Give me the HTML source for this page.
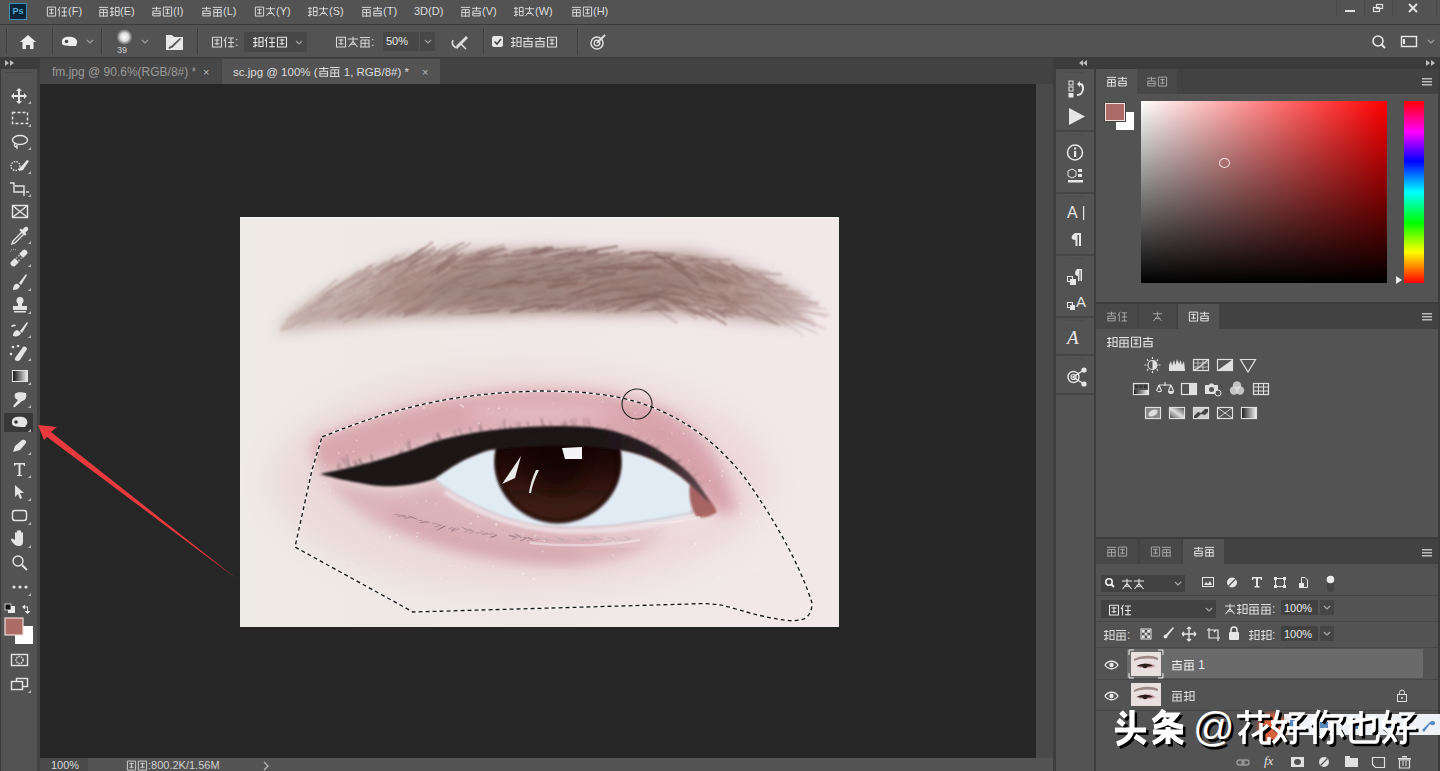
<!DOCTYPE html>
<html><head><meta charset="utf-8">
<style>
*{box-sizing:border-box;margin:0;padding:0}
html,body{width:1440px;height:771px;overflow:hidden;background:#3b3b3b;font-family:"Liberation Sans",sans-serif;color:#dcdcdc}
.a{position:absolute}
.t{position:absolute;white-space:nowrap;font-size:12px;line-height:14px}
#menubar{left:0;top:0;width:1440px;height:24px;background:#535353}
#optbar{left:0;top:25px;width:1440px;height:32px;background:#535353}
#tabbar{left:40px;top:58px;width:1013px;height:26px;background:#424242}
#toolbar{left:1px;top:69px;width:37px;height:702px;background:#535353}
#canvas{left:40px;top:84px;width:996px;height:674px;background:#262626}
#vscroll{left:1036px;top:84px;width:17px;height:674px;background:#4a4a4a}
#status{left:40px;top:758px;width:1013px;height:13px;background:#535353}
#rcol{left:1056px;top:69px;width:38px;height:702px;background:#535353}
.panel{position:absolute;left:1096px;width:342px;background:#535353}
.ptabs{position:absolute;left:0;top:0;width:342px;height:25px;background:#424242}
.ptab{position:absolute;top:0;height:25px;background:#484848;font-size:11px;line-height:25px;text-align:center;color:#a8a8a8}
.ptab.on{background:#535353;color:#e8e8e8}
.sep{position:absolute;width:1px;background:#444}
.g{display:inline-block;width:1em;height:1em;vertical-align:-0.14em;fill:none;stroke:currentColor;stroke-width:1.05;overflow:visible}
</style></head><body><svg width="0" height="0" style="position:absolute">
<symbol id="g0" viewBox="0 0 12 12"><path d="M1 2.5H5.5M3.2 1V11.5M1 6.5H5.5M1 10.5L5.5 9M7 1.5H11V10.5H7ZM7 6H11"/></symbol>
<symbol id="g1" viewBox="0 0 12 12"><path d="M1 2.5H11M6 0.8V5M2 5.5H10V10.8H2ZM2 8.2H10"/></symbol>
<symbol id="g2" viewBox="0 0 12 12"><path d="M1.5 1.2H10.5V11H1.5ZM3.5 4H8.5M6 2.8V9M3.5 7.8H8.5"/></symbol>
<symbol id="g3" viewBox="0 0 12 12"><path d="M3.5 0.8L1 5M2.5 3.8V11.5M5 2H11M8 2V11.5M5 6.5H11M5 10.8H11"/></symbol>
<symbol id="g4" viewBox="0 0 12 12"><path d="M1 3H11M6 0.8V5.5M6 5.5L1.5 11M6 5.5L10.5 11M3 8.2H9"/></symbol>
<symbol id="g5" viewBox="0 0 12 12"><path d="M1 1.5H11M2 4V10.5M2 4H10V10.5M2 7.2H10M6 4V11.5M1 11H11"/></symbol>
</svg>
<div id="menubar" class="a">
  <div class="a" style="left:9px;top:3px;width:18px;height:17px;background:#0a2538;border:1px solid #3b8fb5;color:#52a9d6;font-size:9px;line-height:15px;text-align:center;font-weight:bold">Ps</div>
  <div class="t" style="left:46px;top:4px;font-size:11px"><svg class="g"><use href="#g2"/></svg><svg class="g"><use href="#g3"/></svg>(F)</div>
  <div class="t" style="left:98px;top:4px;font-size:11px"><svg class="g"><use href="#g5"/></svg><svg class="g"><use href="#g0"/></svg>(E)</div>
  <div class="t" style="left:151px;top:4px;font-size:11px"><svg class="g"><use href="#g1"/></svg><svg class="g"><use href="#g2"/></svg>(I)</div>
  <div class="t" style="left:201px;top:4px;font-size:11px"><svg class="g"><use href="#g1"/></svg><svg class="g"><use href="#g5"/></svg>(L)</div>
  <div class="t" style="left:254px;top:4px;font-size:11px"><svg class="g"><use href="#g2"/></svg><svg class="g"><use href="#g4"/></svg>(Y)</div>
  <div class="t" style="left:307px;top:4px;font-size:11px"><svg class="g"><use href="#g0"/></svg><svg class="g"><use href="#g4"/></svg>(S)</div>
  <div class="t" style="left:361px;top:4px;font-size:11px"><svg class="g"><use href="#g5"/></svg><svg class="g"><use href="#g1"/></svg>(T)</div>
  <div class="t" style="left:414px;top:4px;font-size:11px">3D(D)</div>
  <div class="t" style="left:460px;top:4px;font-size:11px"><svg class="g"><use href="#g5"/></svg><svg class="g"><use href="#g1"/></svg>(V)</div>
  <div class="t" style="left:513px;top:4px;font-size:11px"><svg class="g"><use href="#g0"/></svg><svg class="g"><use href="#g4"/></svg>(W)</div>
  <div class="t" style="left:571px;top:4px;font-size:11px"><svg class="g"><use href="#g5"/></svg><svg class="g"><use href="#g2"/></svg>(H)</div>
  <svg class="a" style="left:1330px;top:0" width="110" height="24">
   <rect x="6" y="0" width="1" height="16" fill="#4a4a4a"/><rect x="34" y="0" width="1" height="16" fill="#4a4a4a"/><rect x="62" y="0" width="1" height="16" fill="#4a4a4a"/><rect x="106" y="0" width="1" height="16" fill="#4a4a4a"/>
   <rect x="15" y="10" width="10" height="2" fill="#e0e0e0"/>
   <rect x="43.5" y="7.5" width="6" height="4" fill="none" stroke="#e0e0e0" stroke-width="1.2"/>
   <rect x="46.5" y="4.5" width="6" height="4" fill="none" stroke="#e0e0e0" stroke-width="1.2"/>
   <path d="M79 4 L87 12 M87 4 L79 12" stroke="#e8e8e8" stroke-width="1.8"/>
  </svg>
</div>
<div id="optbar" class="a">
 <svg class="a" style="left:0;top:0" width="1440" height="32" viewBox="0 25 1440 32">
  <g fill="#3f3f3f"><rect x="6" y="28" width="1" height="26"/><rect x="52" y="28" width="1" height="26"/><rect x="101" y="28" width="1" height="26"/><rect x="197" y="28" width="1" height="26"/><rect x="483" y="28" width="1" height="26"/><rect x="577" y="28" width="1" height="26"/></g>
  <g fill="#595959"><rect x="7" y="28" width="1" height="26"/><rect x="53" y="28" width="1" height="26"/><rect x="102" y="28" width="1" height="26"/><rect x="198" y="28" width="1" height="26"/><rect x="484" y="28" width="1" height="26"/><rect x="578" y="28" width="1" height="26"/></g>
  <!-- home -->
  <path d="M28 35 L36 42 L33.5 42 L33.5 49 L30 49 L30 45 L26 45 L26 49 L22.5 49 L22.5 42 L20 42Z" fill="#ececec"/>
  <!-- sponge -->
  <path d="M62 41 C62 37 68 36 72 37 C76 38 78 41 77 43 L76 46 C71 46 64 46 62 44Z" fill="#ececec"/>
  <circle cx="66.5" cy="41.5" r="1.8" fill="#444"/>
  <path d="M87 40 L90 43 L93 40" fill="none" stroke="#a0a0a0" stroke-width="1.2"/>
  <!-- brush preview -->
  <defs><radialGradient id="bp"><stop offset="0" stop-color="#fff"/><stop offset="0.5" stop-color="#ddd"/><stop offset="1" stop-color="#535353"/></radialGradient></defs>
  <circle cx="124.5" cy="37" r="8" fill="url(#bp)"/>
  <path d="M142 40 L145 43 L148 40" fill="none" stroke="#a0a0a0" stroke-width="1.2"/>
  <!-- brush settings -->
  <path d="M166 35 L172 35 L174 37 L183 37 L183 50 L166 50Z" fill="#e8e8e8"/>
  <path d="M170 47 L180 38 L181 39 L172 48Z" fill="#555"/>
  <path d="M168.5 48.5 C169 46.5 170 46 171.5 47 C171 48.5 170 49 168.5 48.5Z" fill="#555"/>
  <!-- dropdown bg -->
  <rect x="244" y="32" width="63" height="20" fill="#474747"/>
  <path d="M296 41 L299 44 L302 41" fill="none" stroke="#a0a0a0" stroke-width="1.2"/>
  <rect x="383" y="32" width="36" height="19" fill="#474747"/>
  <rect x="420" y="32" width="15" height="19" fill="#474747"/>
  <path d="M425 40 L428 43 L431 40" fill="none" stroke="#a0a0a0" stroke-width="1.2"/>
  <!-- airbrush -->
  <path d="M453 40 C451 44 454 48 458 48" fill="none" stroke="#ddd" stroke-width="1.6"/>
  <path d="M456 46 L466 36 L468 38 L458 48Z" fill="#ddd"/>
  <path d="M461 44 L466 49" stroke="#ddd" stroke-width="1.5"/>
  <!-- checkbox -->
  <rect x="492" y="36" width="11" height="11" rx="2" fill="#e8e8e8"/>
  <path d="M494.5 41.5 L497 44 L501 39" fill="none" stroke="#444" stroke-width="1.6"/>
  <!-- pressure icon -->
  <circle cx="597" cy="43" r="6" fill="none" stroke="#ddd" stroke-width="1.5"/>
  <circle cx="597" cy="43" r="2.8" fill="none" stroke="#ddd" stroke-width="1.3"/>
  <path d="M597 43 L605 35" stroke="#ddd" stroke-width="2"/>
  <!-- right -->
  <circle cx="1378" cy="41" r="5" fill="none" stroke="#e8e8e8" stroke-width="1.6"/>
  <path d="M1381.5 44.5 L1385 48" stroke="#e8e8e8" stroke-width="2"/>
  <rect x="1401.5" y="36.5" width="15" height="10" fill="none" stroke="#e8e8e8" stroke-width="1.4"/>
  <rect x="1403" y="39" width="2" height="5" fill="#e8e8e8"/>
  <path d="M1428 40 L1431 43 L1434 40" fill="none" stroke="#a0a0a0" stroke-width="1.2"/>
 </svg>
 <div class="t" style="left:117px;top:20px;font-size:9px;line-height:10px;color:#ccc">39</div>
 <div class="t" style="left:211px;top:10px;font-size:12px;color:#d8d8d8"><svg class="g"><use href="#g2"/></svg><svg class="g"><use href="#g3"/></svg>:</div>
 <div class="t" style="left:252px;top:10px;font-size:12px;color:#e8e8e8"><svg class="g"><use href="#g0"/></svg><svg class="g"><use href="#g3"/></svg><svg class="g"><use href="#g2"/></svg></div>
 <div class="t" style="left:335px;top:10px;font-size:12px;color:#d8d8d8"><svg class="g"><use href="#g2"/></svg><svg class="g"><use href="#g4"/></svg><svg class="g"><use href="#g5"/></svg>:</div>
 <div class="t" style="left:386px;top:9px;font-size:11px;color:#e8e8e8">50%</div>
 <div class="t" style="left:510px;top:10px;font-size:12px;color:#e0e0e0"><svg class="g"><use href="#g0"/></svg><svg class="g"><use href="#g1"/></svg><svg class="g"><use href="#g1"/></svg><svg class="g"><use href="#g2"/></svg></div>
</div>
<div id="tabbar" class="a">
  <div class="a" style="left:0;top:1px;width:181px;height:25px;background:#474747"></div>
  <div class="t" style="left:12px;top:7px;font-size:12px;color:#9a9a9a">fm.jpg @ 90.6%(RGB/8#) *</div>
  <div class="t" style="left:163px;top:7px;font-size:11px;color:#bbb">×</div>
  <div class="a" style="left:182px;top:1px;width:218px;height:25px;background:#535353"></div>
  <div class="t" style="left:193px;top:7px;font-size:11.5px;color:#dcdcdc">sc.jpg @ 100% (<svg class="g"><use href="#g1"/></svg><svg class="g"><use href="#g5"/></svg> 1, RGB/8#) *</div>
  <div class="t" style="left:382px;top:7px;font-size:11px;color:#bbb">×</div>
</div>
<div id="toolbar" class="a"></div>
<svg class="a" style="left:0;top:57px" width="40" height="12"><rect x="0" y="0" width="40" height="12" fill="#3c3c3c"/><rect x="15" y="0" width="25" height="1" fill="#3c3c3c"/><path d="M5 3 L9 6 L5 9Z M10 3 L14 6 L10 9Z" fill="#bdbdbd"/></svg>
<svg class="a" style="left:0;top:69px" width="40" height="702" viewBox="0 69 40 702">
 <rect x="0" y="69" width="1" height="702" fill="#3a3a3a"/>
 <rect x="37" y="69" width="3" height="702" fill="#424242"/>
 <rect x="5" y="72" width="28" height="1" fill="#4a4a4a"/>
 <rect x="4" y="413" width="29" height="19" fill="#383838"/>
 <g fill="#e4e4e4" stroke="none">
  <!-- move -->
  <path d="M19 88 L22 91 L20 91 L20 95 L24 95 L24 93 L27 96 L24 99 L24 97 L20 97 L20 101 L22 101 L19 104 L16 101 L18 101 L18 97 L14 97 L14 99 L11 96 L14 93 L14 95 L18 95 L18 91 L16 91Z"/>
 </g>
 <g fill="none" stroke="#e4e4e4" stroke-width="1.4">
  <!-- marquee -->
  <rect x="12.5" y="112.5" width="15" height="11" stroke-dasharray="3 2"/>
  <!-- lasso -->
  <ellipse cx="20" cy="140" rx="7.5" ry="4.5"/>
  <path d="M15 143 C13 147 17 148 17 145 L17 149"/>
  <!-- quick select -->
  <circle cx="15.5" cy="166" r="4.5" stroke-dasharray="1.5 1.2"/>
  <!-- crop -->
  <path d="M10 183 L14 183 L14 192 L25 192 M24 196 L24 186 L15 186 M26 192 L29 192"/>
  <!-- frame -->
  <rect x="12.5" y="205.5" width="15" height="12"/>
  <path d="M12.5 205.5 L27.5 217.5 M27.5 205.5 L12.5 217.5"/>
  <!-- eyedropper -->
  <path d="M13 241 L22 232 L24 234 L15 243 L12 244Z"/>
  <!-- rect tool -->
  <rect x="12.5" y="510.5" width="14" height="10" rx="2.5"/>
  <!-- zoom -->
  <circle cx="18" cy="561" r="5"/>
  <path d="M22 565 L27 570" stroke-width="2"/>
  <!-- quick mask -->
  <rect x="11.5" y="654.5" width="16" height="11"/>
  <circle cx="19.5" cy="660" r="3.5" stroke-dasharray="1.5 1"/>
  <!-- screen mode -->
  <rect x="16.5" y="678.5" width="11" height="8"/>
  <rect x="11.5" y="681.5" width="11" height="8" fill="#535353"/>
 </g>
 <g fill="#e4e4e4">
  <path d="M19 169 L27 160 L29 161 L23 170 L19 171Z"/>
  <!-- eyedropper top -->
  <path d="M21 231 L25 227 C27 226 29 228 28 230 L24 234Z"/>
  <!-- healing -->
  <path d="M11 262 L23 250 C25 248 29 252 27 254 L15 266 C13 268 9 264 11 262Z"/>
  <g transform="rotate(-45 19 258)"><rect x="16" y="255" width="6" height="6" fill="#4a4a4a"/><circle cx="17.5" cy="256.5" r="0.8" fill="#ddd"/><circle cx="20.5" cy="256.5" r="0.8" fill="#ddd"/><circle cx="17.5" cy="259.5" r="0.8" fill="#ddd"/><circle cx="20.5" cy="259.5" r="0.8" fill="#ddd"/></g>
  <path d="M10 252 A4 4 0 0 1 16 250" fill="none" stroke="#ccc" stroke-width="1" stroke-dasharray="1 1"/>
  <rect x="19" y="231" width="8" height="2.2" transform="rotate(45 23 232)"/>
  <!-- brush -->
  <path d="M19 283 L26 274 L27 275 L21 285Z"/>
  <path d="M13 290 C13 286 15 283 18 284 L20 286 C19 289 16 290 13 290Z"/>
  <!-- stamp -->
  <circle cx="20" cy="300.5" r="3.5"/>
  <rect x="18" y="302" width="4" height="4"/>
  <path d="M13 306 L27 306 L27 310 L13 310Z"/>
  <rect x="14" y="311" width="12" height="1.5"/>
  <!-- history brush -->
  <path d="M20 331 L27 322 L28 323 L22 333Z"/>
  <path d="M13 336 C13 332 16 329 19 331 L21 333 C20 336 16 337 13 336Z"/>
  <path d="M11 327 C12 324 15 324 16 326Z"/>
  <!-- eraser -->
  <path d="M15 358 L23 347 C24 346 27 347 27 349 L20 360 C18 362 14 361 15 358Z"/>
  <circle cx="13" cy="347" r="1.3"/><circle cx="18" cy="346" r="1.3"/><circle cx="11" cy="354" r="1.3"/>
  <!-- smudge -->
  <path d="M15 394 C16 392 22 392 26 393 C27 397 26 400 22 401 L15 407 C13 408 13 406 14 405 L18 400 C15 399 14 396 15 394Z"/>
  <!-- sponge selected -->
  <path d="M12 421 C12 417 18 416 23 417 C27 418 28 422 27 424 L25 427 C20 427 13 427 12 424Z"/>
  <!-- pen -->
  <path d="M13 452 L15 446 L22 440 C24 439 27 441 26 443 L20 450Z"/>
  <!-- type -->
  <path d="M14 463 L25 463 L25 466 L24 466 L23.5 464.5 L20.5 464.5 L20.5 475 L22 475 L22 476 L17 476 L17 475 L18.5 475 L18.5 464.5 L15.5 464.5 L15 466 L14 466Z"/>
  <!-- path select -->
  <path d="M15 485 L24 493 L20 493 L22 498 L20 499 L18 494 L15 497Z"/>
  <!-- hand -->
  <path d="M15 540 L15 533 C15 532 17 532 17 533 L17 538 L17 531 C17 530 19 530 19 531 L19 538 L19 531 C19 530 21 530 21 531 L21 538 L21 533 C21 532 23 532 23 533 L23 542 C23 545 21 546 19 546 C16 546 15 545 13 543 L11 540 C11 539 12 538 13 539Z"/>
  <!-- dots -->
  <circle cx="14" cy="587" r="1.6"/><circle cx="20" cy="587" r="1.6"/><circle cx="26" cy="587" r="1.6"/>
  <!-- small swatches -->
  <rect x="8" y="606" width="7" height="7" fill="#e8e8e8"/>
  <rect x="5" y="604" width="6" height="6" fill="#111" stroke="#eee" stroke-width="0.8"/>
  <path d="M22 607 L25 604.5 L25 606.5 L28 606.5 L28 611 L30.5 611 L27.5 614 L24.5 611 L27 611 L27 607.5 L25 607.5 L25 609.5Z"/>
 </g>
 <!-- corner triangles -->
 <g fill="#b9b9b9">
  <path d="M31 101 L31 104 L28 104Z"/><path d="M31 124 L31 127 L28 127Z"/><path d="M31 147 L31 150 L28 150Z"/>
  <path d="M31 171 L31 174 L28 174Z"/><path d="M31 194 L31 197 L28 197Z"/><path d="M31 241 L31 244 L28 244Z"/>
  <path d="M31 264 L31 267 L28 267Z"/><path d="M31 288 L31 291 L28 291Z"/><path d="M31 311 L31 314 L28 314Z"/>
  <path d="M31 335 L31 338 L28 338Z"/><path d="M31 358 L31 361 L28 361Z"/><path d="M31 382 L31 385 L28 385Z"/>
  <path d="M31 405 L31 408 L28 408Z"/><path d="M31 429 L31 432 L28 432Z"/><path d="M31 452 L31 455 L28 455Z"/>
  <path d="M31 475 L31 478 L28 478Z"/><path d="M31 498 L31 501 L28 501Z"/><path d="M31 522 L31 525 L28 525Z"/>
  <path d="M31 545 L31 548 L28 548Z"/><path d="M31 593 L31 596 L28 596Z"/><path d="M31 690 L31 693 L28 693Z"/>
 </g>
 <!-- gradient tool -->
 <defs><linearGradient id="gt" x1="0" x2="1"><stop offset="0" stop-color="#111"/><stop offset="1" stop-color="#eee"/></linearGradient></defs>
 <rect x="12.5" y="370.5" width="15" height="11" fill="url(#gt)" stroke="#e4e4e4" stroke-width="1"/>
 <circle cx="16" cy="422" r="1.8" fill="#333"/>
 <!-- fg/bg -->
 <rect x="15" y="626" width="18" height="18" fill="#fff"/>
 <rect x="5" y="618" width="18" height="17" fill="#ad6c66" stroke="#f0dcd8" stroke-width="1.2"/>
</svg>

<div id="canvas" class="a"></div>
<svg class="a" style="left:240px;top:217px" width="599" height="410" viewBox="240 217 599 410">
<defs>
 <filter id="b1" x="-20%" y="-20%" width="140%" height="140%"><feGaussianBlur stdDeviation="1.2"/></filter>
 <filter id="b1s" x="-5%" y="-20%" width="110%" height="140%"><feGaussianBlur stdDeviation="0.7"/></filter>
 <filter id="b2" x="-20%" y="-20%" width="140%" height="140%"><feGaussianBlur stdDeviation="3"/></filter>
 <filter id="b3" x="-30%" y="-30%" width="160%" height="160%"><feGaussianBlur stdDeviation="7"/></filter>
 <filter id="b4" x="-30%" y="-30%" width="160%" height="160%"><feGaussianBlur stdDeviation="14"/></filter>
 <linearGradient id="skin" x1="0" y1="0" x2="1" y2="0">
  <stop offset="0" stop-color="#eeeae5"/><stop offset="0.5" stop-color="#f0e8e7"/><stop offset="1" stop-color="#f2e7e9"/>
 </linearGradient>
 <radialGradient id="iris" cx="0.5" cy="0.5" r="0.5">
  <stop offset="0" stop-color="#1a0a08"/><stop offset="0.3" stop-color="#24100b"/><stop offset="0.6" stop-color="#3a1a12"/><stop offset="0.88" stop-color="#3e1c13"/><stop offset="0.96" stop-color="#2a120c"/><stop offset="1" stop-color="#2a120c" stop-opacity="0.5"/>
 </radialGradient>
</defs>
<rect x="240" y="217" width="599" height="410" fill="url(#skin)"/>
<rect x="240" y="217" width="599" height="2" fill="#f6f4f2"/>
<!-- soft pink cheek tones -->
<ellipse cx="520" cy="480" rx="250" ry="110" fill="#e8c8cc" opacity="0.45" filter="url(#b4)"/>
<!-- eyebrow -->
<filter id="bbr" x="-5%" y="-20%" width="110%" height="140%"><feGaussianBlur stdDeviation="1.0"/></filter>
<linearGradient id="bmg" gradientUnits="userSpaceOnUse" x1="274" y1="0" x2="806" y2="0"><stop offset="0" stop-color="#fff" stop-opacity="0.5"/><stop offset="0.25" stop-color="#fff" stop-opacity="0.95"/><stop offset="0.85" stop-color="#fff" stop-opacity="1"/><stop offset="1" stop-color="#fff" stop-opacity="0.6"/></linearGradient>
<mask id="bmask" maskUnits="userSpaceOnUse" x="240" y="217" width="599" height="200"><rect x="240" y="217" width="599" height="200" fill="url(#bmg)"/></mask>
<g mask="url(#bmask)">
<path d="M274 333 L274.0 333.0 L287.6 316.8 L301.3 306.2 L314.9 296.7 L328.6 289.7 L342.2 282.9 L355.8 276.6 L369.5 271.0 L383.1 265.4 L396.8 259.7 L410.4 257.0 L424.1 255.7 L437.7 254.3 L451.3 252.9 L465.0 251.8 L478.6 251.4 L492.3 250.9 L505.9 250.4 L519.5 249.9 L533.2 249.4 L546.8 249.0 L560.5 249.5 L574.1 250.0 L587.7 250.5 L601.4 251.0 L615.0 251.5 L628.7 252.0 L642.3 252.0 L655.9 252.0 L669.6 252.0 L683.2 252.0 L696.9 253.3 L710.5 257.0 L724.2 260.7 L737.8 264.3 L751.4 269.4 L765.1 275.6 L778.7 281.8 L792.4 289.2 L806.0 302.0 L806.0 314.0 L792.4 323.8 L778.7 322.7 L765.1 321.7 L751.4 320.6 L737.8 319.2 L724.2 317.3 L710.5 315.5 L696.9 313.7 L683.2 313.1 L669.6 313.4 L655.9 313.6 L642.3 313.8 L628.7 314.0 L615.0 313.8 L601.4 313.7 L587.7 313.5 L574.1 313.3 L560.5 313.2 L546.8 313.0 L533.2 313.4 L519.5 313.9 L505.9 314.4 L492.3 314.9 L478.6 315.3 L465.0 315.8 L451.3 316.3 L437.7 316.7 L424.1 317.2 L410.4 317.7 L396.8 318.5 L383.1 320.1 L369.5 321.7 L355.8 323.3 L342.2 324.9 L328.6 326.5 L314.9 328.1 L301.3 329.8 L287.6 331.4 L274.0 333.0 Z" fill="#ab8e88" opacity="0.9" filter="url(#b3)"/>
<path d="M380 300 C420 276 480 262 560 258 C630 259 680 266 720 280 C680 302 620 310 560 308 C480 310 420 308 380 300Z" fill="#8a726d" opacity="0.55" filter="url(#b3)"/>
<g filter="url(#bbr)" stroke-linecap="round">
<path d="M448.3 263.4 L461.1 254.9" stroke="#8e6e69" stroke-width="1.37" opacity="0.38"/>
<path d="M544.9 252.4 L559.9 249.6" stroke="#91706b" stroke-width="1.42" opacity="0.72"/>
<path d="M343.1 292.5 L369.1 275.4" stroke="#9e7e78" stroke-width="1.40" opacity="0.79"/>
<path d="M302.5 325.5 L317.3 317.9" stroke="#b4938d" stroke-width="1.31" opacity="0.72"/>
<path d="M373.1 299.5 L390.3 288.0" stroke="#9d7c77" stroke-width="1.06" opacity="0.38"/>
<path d="M386.3 301.6 L403.4 291.8" stroke="#9a7a74" stroke-width="1.45" opacity="0.48"/>
<path d="M695.8 294.9 L719.8 299.0" stroke="#94746e" stroke-width="1.88" opacity="0.68"/>
<path d="M429.5 314.8 L449.1 306.0" stroke="#90706b" stroke-width="1.15" opacity="0.57"/>
<path d="M298.6 322.4 L318.4 308.2" stroke="#997873" stroke-width="1.31" opacity="0.66"/>
<path d="M590.6 286.9 L619.2 281.5" stroke="#7a5a56" stroke-width="1.47" opacity="0.65"/>
<path d="M309.9 319.8 L336.4 302.1" stroke="#9a7a74" stroke-width="1.28" opacity="0.52"/>
<path d="M629.7 254.3 L646.4 251.1" stroke="#93726d" stroke-width="1.06" opacity="0.70"/>
<path d="M346.0 292.3 L372.0 277.8" stroke="#b08f89" stroke-width="1.45" opacity="0.60"/>
<path d="M742.7 309.4 L758.3 320.2" stroke="#9f7f79" stroke-width="1.36" opacity="0.75"/>
<path d="M781.8 289.9 L799.8 292.2" stroke="#a88782" stroke-width="1.48" opacity="0.62"/>
<path d="M416.2 257.7 L434.2 247.5" stroke="#92716c" stroke-width="1.95" opacity="0.66"/>
<path d="M549.1 288.4 L563.6 284.6" stroke="#7b5b57" stroke-width="1.78" opacity="0.74"/>
<path d="M697.7 277.4 L712.9 281.7" stroke="#8e6d69" stroke-width="1.06" opacity="0.38"/>
<path d="M387.8 273.2 L401.0 266.2" stroke="#ac8b85" stroke-width="1.15" opacity="0.40"/>
<path d="M469.3 254.3 L493.1 246.6" stroke="#977772" stroke-width="1.25" opacity="0.51"/>
<path d="M469.5 260.3 L500.0 250.7" stroke="#8d6d68" stroke-width="1.48" opacity="0.39"/>
<path d="M331.8 301.5 L357.6 288.4" stroke="#af8e88" stroke-width="1.02" opacity="0.78"/>
<path d="M555.9 259.4 L570.0 256.3" stroke="#82625d" stroke-width="1.98" opacity="0.74"/>
<path d="M644.2 268.6 L661.0 265.9" stroke="#805f5b" stroke-width="1.53" opacity="0.70"/>
<path d="M451.4 267.6 L481.8 258.4" stroke="#83635e" stroke-width="1.81" opacity="0.72"/>
<path d="M667.2 266.5 L686.3 273.7" stroke="#9d7d77" stroke-width="1.03" opacity="0.48"/>
<path d="M414.3 298.4 L431.4 284.5" stroke="#896965" stroke-width="1.99" opacity="0.78"/>
<path d="M469.8 266.3 L487.2 264.2" stroke="#977772" stroke-width="1.62" opacity="0.76"/>
<path d="M720.1 287.0 L745.6 299.5" stroke="#a6857f" stroke-width="1.66" opacity="0.76"/>
<path d="M689.5 297.3 L705.8 302.9" stroke="#8a6a65" stroke-width="1.33" opacity="0.71"/>
<path d="M789.1 301.4 L818.9 310.0" stroke="#987873" stroke-width="1.17" opacity="0.41"/>
<path d="M357.5 317.8 L370.9 307.9" stroke="#967670" stroke-width="1.98" opacity="0.65"/>
<path d="M462.3 286.9 L476.5 285.6" stroke="#80605c" stroke-width="1.65" opacity="0.59"/>
<path d="M769.1 296.9 L792.8 313.4" stroke="#a88882" stroke-width="1.25" opacity="0.48"/>
<path d="M404.5 292.8 L423.8 283.1" stroke="#a78781" stroke-width="1.91" opacity="0.51"/>
<path d="M519.0 287.1 L539.5 280.3" stroke="#7b5b57" stroke-width="1.50" opacity="0.59"/>
<path d="M553.4 251.4 L570.4 248.3" stroke="#93736e" stroke-width="1.80" opacity="0.43"/>
<path d="M527.1 295.6 L546.5 291.3" stroke="#8b6b66" stroke-width="1.56" opacity="0.70"/>
<path d="M333.8 308.7 L350.8 300.3" stroke="#997973" stroke-width="1.51" opacity="0.60"/>
<path d="M677.8 307.0 L701.6 314.7" stroke="#94746f" stroke-width="1.51" opacity="0.66"/>
<path d="M515.9 284.1 L546.3 278.1" stroke="#83635e" stroke-width="1.88" opacity="0.77"/>
<path d="M414.5 290.6 L437.2 272.3" stroke="#a5857f" stroke-width="1.12" opacity="0.55"/>
<path d="M316.2 304.2 L340.1 293.8" stroke="#9a7974" stroke-width="1.90" opacity="0.42"/>
<path d="M654.7 292.4 L684.4 295.3" stroke="#7e5e5a" stroke-width="1.22" opacity="0.78"/>
<path d="M487.5 282.2 L514.7 272.4" stroke="#997973" stroke-width="1.43" opacity="0.58"/>
<path d="M456.4 265.5 L483.1 261.5" stroke="#a07f7a" stroke-width="1.55" opacity="0.55"/>
<path d="M287.5 322.1 L306.9 309.4" stroke="#b6958f" stroke-width="1.99" opacity="0.70"/>
<path d="M789.1 291.3 L803.6 294.0" stroke="#957570" stroke-width="1.27" opacity="0.41"/>
<path d="M500.1 308.1 L518.0 302.7" stroke="#9d7c77" stroke-width="1.92" opacity="0.61"/>
<path d="M646.4 258.3 L672.7 256.5" stroke="#8a6a65" stroke-width="1.07" opacity="0.77"/>
<path d="M611.7 300.8 L641.0 298.5" stroke="#9c7b76" stroke-width="1.86" opacity="0.55"/>
<path d="M456.4 287.5 L474.2 281.5" stroke="#9f7f79" stroke-width="1.53" opacity="0.46"/>
<path d="M335.6 293.3 L351.8 286.4" stroke="#a88882" stroke-width="1.31" opacity="0.69"/>
<path d="M430.5 286.0 L448.8 277.4" stroke="#a78680" stroke-width="1.25" opacity="0.36"/>
<path d="M663.6 285.8 L685.9 288.7" stroke="#7f5f5b" stroke-width="1.11" opacity="0.72"/>
<path d="M505.3 282.1 L525.5 275.9" stroke="#8b6a66" stroke-width="1.69" opacity="0.79"/>
<path d="M458.3 304.7 L482.8 298.1" stroke="#987772" stroke-width="1.35" opacity="0.37"/>
<path d="M346.3 284.8 L361.5 274.0" stroke="#ac8b85" stroke-width="1.08" opacity="0.73"/>
<path d="M735.9 300.4 L753.9 304.0" stroke="#a2817c" stroke-width="1.46" opacity="0.42"/>
<path d="M512.5 267.5 L542.2 257.0" stroke="#866561" stroke-width="1.24" opacity="0.78"/>
<path d="M440.8 276.6 L460.2 268.8" stroke="#93736e" stroke-width="1.50" opacity="0.44"/>
<path d="M543.5 250.4 L559.0 248.4" stroke="#856561" stroke-width="1.04" opacity="0.36"/>
<path d="M438.0 269.3 L457.9 256.7" stroke="#896964" stroke-width="1.66" opacity="0.67"/>
<path d="M740.4 286.5 L771.3 293.6" stroke="#a68580" stroke-width="1.72" opacity="0.64"/>
<path d="M301.0 325.3 L320.9 309.7" stroke="#9e7e78" stroke-width="1.81" opacity="0.41"/>
<path d="M553.5 281.4 L580.7 273.0" stroke="#7c5c58" stroke-width="1.58" opacity="0.75"/>
<path d="M637.2 294.5 L651.7 292.8" stroke="#9a7a75" stroke-width="1.36" opacity="0.40"/>
<path d="M717.6 290.9 L740.5 301.7" stroke="#91706b" stroke-width="1.49" opacity="0.35"/>
<path d="M697.6 298.1 L719.8 306.2" stroke="#906f6b" stroke-width="1.07" opacity="0.68"/>
<path d="M410.7 262.4 L434.9 250.2" stroke="#a0807a" stroke-width="1.74" opacity="0.79"/>
<path d="M537.8 274.0 L563.6 268.9" stroke="#7d5d59" stroke-width="1.62" opacity="0.64"/>
<path d="M318.8 300.2 L343.2 288.0" stroke="#aa8a84" stroke-width="1.57" opacity="0.36"/>
<path d="M309.9 308.3 L331.8 293.5" stroke="#9e7e78" stroke-width="1.29" opacity="0.58"/>
<path d="M522.4 279.7 L552.4 277.1" stroke="#94736e" stroke-width="1.98" opacity="0.77"/>
<path d="M287.2 323.9 L312.4 305.1" stroke="#a98882" stroke-width="1.27" opacity="0.44"/>
<path d="M775.4 289.8 L790.6 296.3" stroke="#9d7d77" stroke-width="1.95" opacity="0.41"/>
<path d="M709.4 286.5 L731.1 302.0" stroke="#9f7f79" stroke-width="1.90" opacity="0.57"/>
<path d="M291.1 314.3 L310.0 303.0" stroke="#ad8c86" stroke-width="1.14" opacity="0.50"/>
<path d="M444.3 305.8 L469.8 295.5" stroke="#8a6a65" stroke-width="1.12" opacity="0.77"/>
<path d="M653.1 306.8 L673.3 310.9" stroke="#957570" stroke-width="2.00" opacity="0.62"/>
<path d="M467.7 279.3 L482.5 277.3" stroke="#9d7d77" stroke-width="1.83" opacity="0.48"/>
<path d="M770.1 289.4 L792.9 293.7" stroke="#a88882" stroke-width="1.37" opacity="0.78"/>
<path d="M743.1 309.1 L770.7 322.1" stroke="#8d6c67" stroke-width="1.55" opacity="0.67"/>
<path d="M304.0 322.2 L327.9 308.4" stroke="#a1807b" stroke-width="1.29" opacity="0.37"/>
<path d="M765.5 282.4 L784.6 288.9" stroke="#a3837d" stroke-width="1.74" opacity="0.79"/>
<path d="M414.8 296.2 L436.2 285.2" stroke="#9d7c77" stroke-width="1.17" opacity="0.42"/>
<path d="M387.3 313.5 L402.7 304.3" stroke="#906f6a" stroke-width="2.00" opacity="0.55"/>
<path d="M351.4 287.8 L369.9 279.7" stroke="#ae8e87" stroke-width="1.24" opacity="0.47"/>
<path d="M577.6 305.5 L598.2 299.7" stroke="#8f6f6a" stroke-width="1.52" opacity="0.52"/>
<path d="M455.9 257.2 L487.0 253.0" stroke="#9b7a75" stroke-width="1.50" opacity="0.63"/>
<path d="M731.9 275.3 L750.0 278.8" stroke="#9b7a75" stroke-width="1.45" opacity="0.78"/>
<path d="M724.4 309.4 L739.0 309.6" stroke="#93726d" stroke-width="1.90" opacity="0.56"/>
<path d="M586.9 251.5 L617.1 246.3" stroke="#7a5a56" stroke-width="1.86" opacity="0.79"/>
<path d="M408.7 264.6 L429.9 254.8" stroke="#906f6a" stroke-width="1.94" opacity="0.67"/>
<path d="M618.5 298.7 L642.0 294.2" stroke="#9d7c77" stroke-width="1.78" opacity="0.45"/>
<path d="M761.9 304.4 L777.8 307.8" stroke="#a78680" stroke-width="1.64" opacity="0.66"/>
<path d="M337.0 289.2 L357.9 276.4" stroke="#a5857f" stroke-width="1.22" opacity="0.62"/>
<path d="M283.5 325.2 L310.5 309.4" stroke="#a2817b" stroke-width="1.88" opacity="0.56"/>
<path d="M401.5 273.3 L422.1 256.4" stroke="#9f7f79" stroke-width="1.02" opacity="0.57"/>
<path d="M632.8 278.2 L658.6 274.8" stroke="#7a5a56" stroke-width="1.23" opacity="0.37"/>
<path d="M455.8 279.4 L472.8 274.9" stroke="#866661" stroke-width="1.74" opacity="0.58"/>
<path d="M385.9 317.2 L411.4 303.8" stroke="#a88882" stroke-width="1.22" opacity="0.69"/>
<path d="M433.1 313.0 L448.0 304.1" stroke="#a2827c" stroke-width="1.42" opacity="0.65"/>
<path d="M777.0 287.9 L794.2 292.7" stroke="#8d6c68" stroke-width="1.14" opacity="0.37"/>
<path d="M309.6 311.8 L333.1 293.3" stroke="#9d7c77" stroke-width="2.00" opacity="0.77"/>
<path d="M451.2 265.3 L477.1 256.4" stroke="#a0807a" stroke-width="1.66" opacity="0.52"/>
<path d="M474.7 273.0 L488.6 271.6" stroke="#95756f" stroke-width="1.35" opacity="0.78"/>
<path d="M343.1 322.4 L361.5 313.5" stroke="#987772" stroke-width="1.82" opacity="0.54"/>
<path d="M303.9 316.3 L330.7 301.6" stroke="#b1908a" stroke-width="1.36" opacity="0.75"/>
<path d="M293.9 319.4 L316.2 302.8" stroke="#b7968f" stroke-width="1.03" opacity="0.38"/>
<path d="M762.0 286.8 L788.1 301.9" stroke="#a2817c" stroke-width="1.27" opacity="0.78"/>
<path d="M602.5 267.9 L621.5 262.8" stroke="#8d6d68" stroke-width="1.00" opacity="0.69"/>
<path d="M760.1 303.4 L771.5 312.3" stroke="#a78781" stroke-width="1.48" opacity="0.78"/>
<path d="M779.8 298.2 L801.2 302.0" stroke="#9f7f79" stroke-width="1.93" opacity="0.43"/>
<path d="M700.2 298.0 L723.6 313.1" stroke="#92726d" stroke-width="1.33" opacity="0.49"/>
<path d="M468.3 301.2 L485.8 299.9" stroke="#896964" stroke-width="1.25" opacity="0.38"/>
<path d="M295.8 321.2 L323.8 306.4" stroke="#997873" stroke-width="1.99" opacity="0.47"/>
<path d="M322.2 297.0 L345.2 283.2" stroke="#a5847e" stroke-width="1.23" opacity="0.54"/>
<path d="M604.3 292.9 L632.4 285.0" stroke="#846460" stroke-width="1.12" opacity="0.73"/>
<path d="M432.5 289.9 L456.5 276.8" stroke="#a0807a" stroke-width="1.25" opacity="0.46"/>
<path d="M358.6 316.7 L375.4 306.1" stroke="#a5857f" stroke-width="1.99" opacity="0.58"/>
<path d="M399.7 306.1 L426.2 288.4" stroke="#aa8a84" stroke-width="1.47" opacity="0.72"/>
<path d="M720.1 311.1 L739.4 311.6" stroke="#a88781" stroke-width="1.19" opacity="0.79"/>
<path d="M584.8 308.2 L614.0 303.4" stroke="#8f6e69" stroke-width="1.26" opacity="0.70"/>
<path d="M775.4 285.6 L798.5 295.8" stroke="#a88781" stroke-width="1.37" opacity="0.41"/>
<path d="M385.3 279.1 L406.9 265.1" stroke="#a6857f" stroke-width="1.01" opacity="0.50"/>
<path d="M634.8 264.1 L652.3 261.5" stroke="#7d5d58" stroke-width="1.55" opacity="0.38"/>
<path d="M331.3 303.5 L353.0 290.0" stroke="#b1918a" stroke-width="1.16" opacity="0.66"/>
<path d="M493.5 269.4 L524.4 264.9" stroke="#91706b" stroke-width="1.57" opacity="0.51"/>
<path d="M497.1 305.3 L516.4 298.3" stroke="#9b7a75" stroke-width="1.73" opacity="0.44"/>
<path d="M281.1 330.6 L306.1 316.4" stroke="#ab8b84" stroke-width="1.88" opacity="0.56"/>
<path d="M363.5 275.1 L385.2 261.6" stroke="#8e6e69" stroke-width="1.09" opacity="0.63"/>
<path d="M473.1 283.8 L492.1 282.0" stroke="#8e6e69" stroke-width="1.93" opacity="0.40"/>
<path d="M536.0 300.2 L552.6 294.4" stroke="#997974" stroke-width="1.94" opacity="0.79"/>
<path d="M531.9 253.8 L551.8 247.1" stroke="#7a5a56" stroke-width="1.62" opacity="0.72"/>
<path d="M362.3 311.6 L381.4 302.2" stroke="#94746f" stroke-width="1.83" opacity="0.43"/>
<path d="M392.7 284.6 L410.6 273.7" stroke="#a88882" stroke-width="1.25" opacity="0.68"/>
<path d="M750.0 271.8 L775.5 282.3" stroke="#aa8983" stroke-width="1.84" opacity="0.40"/>
<path d="M593.3 285.2 L612.3 280.6" stroke="#8b6b66" stroke-width="1.58" opacity="0.54"/>
<path d="M624.6 279.7 L638.7 277.1" stroke="#856560" stroke-width="1.49" opacity="0.46"/>
<path d="M679.6 299.2 L696.0 304.6" stroke="#94746f" stroke-width="1.11" opacity="0.41"/>
<path d="M504.5 257.1 L527.3 252.9" stroke="#977671" stroke-width="1.64" opacity="0.39"/>
<path d="M663.8 299.2 L677.8 304.5" stroke="#91716c" stroke-width="1.38" opacity="0.78"/>
<path d="M349.6 316.9 L370.5 299.5" stroke="#977771" stroke-width="1.19" opacity="0.79"/>
<path d="M536.7 309.6 L552.8 304.2" stroke="#83635f" stroke-width="1.93" opacity="0.38"/>
<path d="M462.6 299.8 L492.6 296.8" stroke="#9b7a75" stroke-width="1.82" opacity="0.41"/>
<path d="M542.2 307.2 L560.8 305.0" stroke="#8d6d68" stroke-width="1.32" opacity="0.37"/>
<path d="M373.8 278.3 L394.2 261.8" stroke="#8e6e69" stroke-width="1.17" opacity="0.70"/>
<path d="M338.5 306.2 L355.6 294.9" stroke="#95756f" stroke-width="1.56" opacity="0.61"/>
<path d="M742.2 272.0 L761.7 288.2" stroke="#9c7b76" stroke-width="1.80" opacity="0.47"/>
<path d="M799.0 309.7 L825.9 316.6" stroke="#a4847e" stroke-width="1.18" opacity="0.68"/>
<path d="M303.4 324.4 L326.2 313.0" stroke="#95756f" stroke-width="1.59" opacity="0.65"/>
<path d="M442.5 254.9 L457.9 248.5" stroke="#8b6b66" stroke-width="1.43" opacity="0.58"/>
<path d="M749.1 275.9 L774.5 280.0" stroke="#ab8a84" stroke-width="1.00" opacity="0.51"/>
<path d="M333.9 301.2 L356.0 290.4" stroke="#9f7f79" stroke-width="1.20" opacity="0.63"/>
<path d="M527.8 259.0 L545.2 253.0" stroke="#91716c" stroke-width="1.10" opacity="0.64"/>
<path d="M736.3 306.4 L754.3 311.6" stroke="#ad8c86" stroke-width="1.64" opacity="0.60"/>
<path d="M462.3 292.9 L492.6 287.3" stroke="#896965" stroke-width="1.25" opacity="0.76"/>
<path d="M301.1 318.7 L317.1 309.8" stroke="#b6958e" stroke-width="1.78" opacity="0.36"/>
<path d="M567.8 308.6 L585.3 307.0" stroke="#896964" stroke-width="1.51" opacity="0.64"/>
<path d="M705.8 266.7 L724.8 270.9" stroke="#a2827c" stroke-width="1.89" opacity="0.70"/>
<path d="M654.3 253.4 L677.1 268.6" stroke="#896964" stroke-width="1.74" opacity="0.55"/>
<path d="M396.8 266.7 L410.0 260.2" stroke="#9e7e78" stroke-width="1.75" opacity="0.66"/>
<path d="M722.6 300.3 L746.2 304.7" stroke="#9b7b75" stroke-width="1.79" opacity="0.59"/>
<path d="M417.5 295.3 L431.4 283.9" stroke="#8b6a66" stroke-width="1.02" opacity="0.47"/>
<path d="M402.2 302.1 L423.5 284.8" stroke="#a1817b" stroke-width="1.88" opacity="0.50"/>
<path d="M403.8 311.5 L425.9 297.0" stroke="#967671" stroke-width="1.98" opacity="0.56"/>
<path d="M719.7 299.0 L737.8 311.3" stroke="#90706b" stroke-width="1.57" opacity="0.49"/>
<path d="M389.5 297.7 L417.4 285.7" stroke="#a98882" stroke-width="1.03" opacity="0.40"/>
<path d="M766.6 292.3 L781.1 293.7" stroke="#ae8d87" stroke-width="1.69" opacity="0.64"/>
<path d="M644.6 297.0 L669.2 295.3" stroke="#93736e" stroke-width="1.82" opacity="0.72"/>
<path d="M746.8 271.6 L771.9 289.0" stroke="#896864" stroke-width="1.11" opacity="0.44"/>
<path d="M336.9 287.9 L359.7 270.5" stroke="#9c7c76" stroke-width="1.83" opacity="0.63"/>
<path d="M429.2 262.1 L454.4 251.0" stroke="#9d7d77" stroke-width="1.32" opacity="0.54"/>
<path d="M289.0 319.8 L312.9 307.5" stroke="#ab8a84" stroke-width="1.32" opacity="0.78"/>
<path d="M543.0 302.9 L557.1 299.5" stroke="#8f6f6a" stroke-width="1.44" opacity="0.70"/>
<path d="M460.4 296.7 L477.9 292.9" stroke="#866561" stroke-width="1.09" opacity="0.72"/>
<path d="M367.6 272.8 L392.6 260.8" stroke="#8b6b66" stroke-width="1.00" opacity="0.57"/>
<path d="M536.5 299.7 L559.3 297.3" stroke="#91716c" stroke-width="1.83" opacity="0.47"/>
<path d="M774.5 292.4 L800.8 296.4" stroke="#9e7e78" stroke-width="1.11" opacity="0.64"/>
<path d="M320.5 319.7 L343.7 303.8" stroke="#a0807a" stroke-width="1.36" opacity="0.53"/>
<path d="M485.6 307.3 L515.5 305.0" stroke="#a2827c" stroke-width="1.21" opacity="0.47"/>
<path d="M752.0 295.2 L780.9 303.0" stroke="#a5857f" stroke-width="1.46" opacity="0.59"/>
<path d="M674.9 297.6 L693.1 306.5" stroke="#997873" stroke-width="1.16" opacity="0.73"/>
<path d="M626.3 297.5 L648.0 295.2" stroke="#83635e" stroke-width="1.58" opacity="0.41"/>
<path d="M521.0 305.7 L538.3 303.6" stroke="#95756f" stroke-width="1.70" opacity="0.73"/>
<path d="M359.3 283.3 L377.1 274.4" stroke="#9e7d78" stroke-width="1.16" opacity="0.50"/>
<path d="M377.6 318.5 L390.5 309.4" stroke="#8f6f6a" stroke-width="1.10" opacity="0.52"/>
<path d="M795.5 316.5 L814.5 327.2" stroke="#ae8d87" stroke-width="1.64" opacity="0.40"/>
<path d="M386.6 285.8 L406.1 277.7" stroke="#91716c" stroke-width="1.69" opacity="0.58"/>
<path d="M610.6 280.3 L635.4 278.0" stroke="#8c6b67" stroke-width="1.74" opacity="0.76"/>
<path d="M504.2 287.0 L525.0 281.2" stroke="#967570" stroke-width="1.72" opacity="0.75"/>
<path d="M685.1 294.4 L706.9 309.1" stroke="#8e6e69" stroke-width="1.45" opacity="0.49"/>
<path d="M608.5 258.2 L636.1 253.2" stroke="#7c5c58" stroke-width="1.63" opacity="0.46"/>
<path d="M500.8 279.8 L521.6 274.8" stroke="#856460" stroke-width="1.93" opacity="0.43"/>
<path d="M622.3 299.6 L644.8 295.7" stroke="#7c5c58" stroke-width="1.04" opacity="0.59"/>
<path d="M362.6 311.3 L380.8 296.7" stroke="#af8e88" stroke-width="1.57" opacity="0.59"/>
<path d="M655.3 283.5 L681.4 296.0" stroke="#8d6c68" stroke-width="1.41" opacity="0.78"/>
<path d="M388.5 301.3 L412.7 287.9" stroke="#aa8a84" stroke-width="1.98" opacity="0.51"/>
<path d="M307.8 309.6 L320.2 302.7" stroke="#a88781" stroke-width="1.42" opacity="0.66"/>
<path d="M463.2 269.3 L490.4 266.1" stroke="#7e5e5a" stroke-width="1.53" opacity="0.45"/>
<path d="M699.6 277.8 L715.7 280.2" stroke="#896964" stroke-width="1.81" opacity="0.64"/>
<path d="M524.8 285.6 L555.9 281.8" stroke="#8f6f6a" stroke-width="1.64" opacity="0.72"/>
<path d="M707.3 283.8 L730.7 288.6" stroke="#a2827c" stroke-width="1.83" opacity="0.51"/>
<path d="M725.5 276.6 L743.4 281.4" stroke="#997873" stroke-width="1.19" opacity="0.35"/>
<path d="M657.7 269.7 L676.8 273.1" stroke="#8c6c67" stroke-width="1.43" opacity="0.64"/>
<path d="M624.8 274.6 L652.6 265.1" stroke="#987872" stroke-width="1.83" opacity="0.76"/>
<path d="M690.4 261.3 L711.6 275.2" stroke="#a1807a" stroke-width="1.01" opacity="0.78"/>
<path d="M623.0 267.8 L639.5 266.4" stroke="#90706b" stroke-width="1.78" opacity="0.51"/>
<path d="M358.3 317.7 L372.0 307.6" stroke="#93736e" stroke-width="1.61" opacity="0.70"/>
<path d="M629.6 306.6 L657.5 298.4" stroke="#9a7974" stroke-width="1.69" opacity="0.59"/>
<path d="M668.2 279.0 L687.8 292.9" stroke="#977771" stroke-width="1.23" opacity="0.41"/>
<path d="M537.4 253.9 L553.7 250.8" stroke="#83635f" stroke-width="1.50" opacity="0.59"/>
<path d="M731.9 264.1 L750.5 276.5" stroke="#93736e" stroke-width="1.67" opacity="0.73"/>
<path d="M475.2 278.4 L489.7 273.3" stroke="#896964" stroke-width="1.64" opacity="0.36"/>
<path d="M598.7 293.3 L617.6 286.9" stroke="#7a5a56" stroke-width="1.51" opacity="0.57"/>
<path d="M750.1 271.5 L772.3 283.6" stroke="#9f7e79" stroke-width="1.86" opacity="0.51"/>
<path d="M527.6 283.2 L544.7 278.3" stroke="#8b6b66" stroke-width="1.42" opacity="0.60"/>
<path d="M712.9 275.1 L730.7 286.7" stroke="#94746f" stroke-width="1.27" opacity="0.58"/>
<path d="M790.8 311.0 L807.8 321.5" stroke="#a88882" stroke-width="1.30" opacity="0.61"/>
<path d="M611.9 299.7 L638.9 298.0" stroke="#7e5e5a" stroke-width="1.55" opacity="0.37"/>
<path d="M436.0 255.8 L463.6 242.7" stroke="#8d6c68" stroke-width="1.66" opacity="0.71"/>
<path d="M756.6 301.6 L779.5 312.2" stroke="#967670" stroke-width="1.60" opacity="0.66"/>
<path d="M389.8 300.1 L413.7 286.1" stroke="#ab8a84" stroke-width="1.18" opacity="0.37"/>
<path d="M685.4 307.0 L703.9 316.1" stroke="#8a6965" stroke-width="1.79" opacity="0.60"/>
<path d="M413.7 275.5 L430.9 265.7" stroke="#997973" stroke-width="1.64" opacity="0.77"/>
<path d="M306.7 317.4 L321.6 311.2" stroke="#9a7a75" stroke-width="1.58" opacity="0.76"/>
<path d="M512.8 252.0 L537.2 247.9" stroke="#7a5a56" stroke-width="1.98" opacity="0.56"/>
<path d="M494.9 258.1 L512.2 253.8" stroke="#94746f" stroke-width="1.02" opacity="0.35"/>
<path d="M637.7 260.3 L652.4 255.1" stroke="#7a5a56" stroke-width="1.13" opacity="0.36"/>
<path d="M656.4 267.4 L671.5 275.9" stroke="#9b7a75" stroke-width="1.77" opacity="0.67"/>
<path d="M728.0 302.2 L753.3 303.7" stroke="#92726d" stroke-width="1.46" opacity="0.77"/>
<path d="M411.6 314.5 L423.3 306.4" stroke="#ad8c86" stroke-width="1.65" opacity="0.72"/>
<path d="M319.9 304.8 L333.8 295.1" stroke="#977671" stroke-width="1.49" opacity="0.38"/>
<path d="M471.3 288.2 L497.1 283.5" stroke="#9d7c77" stroke-width="1.80" opacity="0.51"/>
<path d="M617.2 290.5 L637.8 286.8" stroke="#80605c" stroke-width="1.94" opacity="0.70"/>
<path d="M576.1 269.0 L607.6 266.8" stroke="#7d5d59" stroke-width="1.83" opacity="0.50"/>
<path d="M596.7 311.2 L620.4 303.9" stroke="#95746f" stroke-width="1.43" opacity="0.75"/>
<path d="M476.1 294.9 L505.5 288.0" stroke="#856561" stroke-width="1.28" opacity="0.35"/>
<path d="M416.4 282.4 L440.5 266.9" stroke="#896964" stroke-width="1.04" opacity="0.72"/>
<path d="M705.0 306.1 L722.4 313.5" stroke="#8b6b66" stroke-width="1.81" opacity="0.66"/>
<path d="M758.6 289.8 L782.6 291.2" stroke="#91716c" stroke-width="1.20" opacity="0.69"/>
<path d="M768.1 288.0 L792.0 298.8" stroke="#9e7e78" stroke-width="1.21" opacity="0.46"/>
<path d="M673.1 299.9 L687.9 304.9" stroke="#886763" stroke-width="1.77" opacity="0.45"/>
<path d="M582.9 306.1 L605.1 298.9" stroke="#8d6d68" stroke-width="1.59" opacity="0.44"/>
<path d="M379.2 277.3 L396.1 265.6" stroke="#997973" stroke-width="1.40" opacity="0.58"/>
<path d="M356.4 279.4 L372.3 266.1" stroke="#ad8c86" stroke-width="1.63" opacity="0.70"/>
<path d="M360.1 303.3 L380.7 292.2" stroke="#b1918a" stroke-width="1.03" opacity="0.80"/>
<path d="M733.6 290.2 L750.8 297.4" stroke="#8f6f6a" stroke-width="1.43" opacity="0.78"/>
<path d="M681.6 301.4 L696.1 313.0" stroke="#a5847e" stroke-width="1.20" opacity="0.43"/>
<path d="M322.0 295.6 L347.2 279.9" stroke="#a4847e" stroke-width="1.95" opacity="0.76"/>
<path d="M311.8 316.4 L325.9 308.6" stroke="#95746f" stroke-width="1.26" opacity="0.60"/>
<path d="M615.0 310.2 L635.4 305.0" stroke="#90706b" stroke-width="1.16" opacity="0.78"/>
<path d="M799.6 301.9 L818.2 302.4" stroke="#a78680" stroke-width="1.90" opacity="0.76"/>
<path d="M718.4 262.7 L741.2 276.7" stroke="#8e6e69" stroke-width="1.99" opacity="0.38"/>
<path d="M354.2 311.7 L374.5 295.2" stroke="#a98882" stroke-width="1.59" opacity="0.69"/>
<path d="M333.5 300.2 L348.0 292.9" stroke="#a3827d" stroke-width="1.17" opacity="0.46"/>
<path d="M353.3 308.4 L378.2 298.3" stroke="#ac8c85" stroke-width="1.04" opacity="0.77"/>
<path d="M394.0 314.1 L417.8 295.8" stroke="#aa8a84" stroke-width="1.45" opacity="0.39"/>
<path d="M766.5 313.9 L786.6 323.3" stroke="#a5857f" stroke-width="1.82" opacity="0.56"/>
<path d="M608.4 260.9 L623.3 259.1" stroke="#7c5c58" stroke-width="1.55" opacity="0.42"/>
<path d="M736.0 279.0 L752.1 283.7" stroke="#a0807a" stroke-width="1.84" opacity="0.50"/>
<path d="M366.3 296.8 L393.0 282.7" stroke="#ad8c86" stroke-width="1.98" opacity="0.38"/>
<path d="M748.8 302.7 L771.1 306.0" stroke="#a4837e" stroke-width="1.26" opacity="0.44"/>
<path d="M469.6 314.1 L498.4 303.6" stroke="#a3827c" stroke-width="1.29" opacity="0.75"/>
<path d="M308.2 320.9 L336.3 306.4" stroke="#b79690" stroke-width="1.81" opacity="0.50"/>
<path d="M351.7 279.4 L370.5 265.3" stroke="#aa8a83" stroke-width="1.44" opacity="0.76"/>
<path d="M392.8 294.1 L408.5 287.0" stroke="#92716c" stroke-width="1.71" opacity="0.44"/>
<path d="M319.7 297.9 L338.9 285.4" stroke="#ab8b85" stroke-width="1.21" opacity="0.63"/>
<path d="M650.3 301.4 L666.5 308.4" stroke="#a07f79" stroke-width="1.73" opacity="0.53"/>
<path d="M657.6 256.3 L674.5 267.0" stroke="#7d5d59" stroke-width="1.86" opacity="0.57"/>
<path d="M286.1 329.6 L311.7 314.5" stroke="#b08f89" stroke-width="1.19" opacity="0.72"/>
<path d="M471.1 262.7 L495.5 258.7" stroke="#9e7d78" stroke-width="1.52" opacity="0.55"/>
<path d="M549.2 257.6 L576.9 250.1" stroke="#7a5a56" stroke-width="1.32" opacity="0.67"/>
<path d="M478.6 298.9 L508.2 296.8" stroke="#80605c" stroke-width="1.49" opacity="0.58"/>
<path d="M557.0 283.6 L588.4 281.7" stroke="#92716c" stroke-width="1.18" opacity="0.40"/>
<path d="M409.7 306.0 L424.3 300.0" stroke="#94736e" stroke-width="1.20" opacity="0.36"/>
<path d="M593.3 286.8 L619.4 281.3" stroke="#977771" stroke-width="1.87" opacity="0.67"/>
<path d="M301.8 309.5 L321.5 297.7" stroke="#ad8c86" stroke-width="1.12" opacity="0.53"/>
<path d="M350.0 305.4 L363.2 295.3" stroke="#9f7e79" stroke-width="1.75" opacity="0.42"/>
<path d="M712.5 311.2 L733.3 317.0" stroke="#8d6d68" stroke-width="1.53" opacity="0.53"/>
<path d="M773.1 312.1 L790.9 316.4" stroke="#a6857f" stroke-width="1.44" opacity="0.79"/>
<path d="M701.1 308.2 L725.8 323.9" stroke="#a78781" stroke-width="1.52" opacity="0.78"/>
<path d="M769.5 289.2 L793.8 296.6" stroke="#a2817c" stroke-width="1.53" opacity="0.38"/>
<path d="M505.8 282.7 L522.3 281.7" stroke="#7a5a56" stroke-width="1.78" opacity="0.77"/>
<path d="M611.1 301.2 L639.5 292.0" stroke="#9d7d77" stroke-width="1.64" opacity="0.47"/>
<path d="M634.9 269.4 L664.8 262.9" stroke="#84645f" stroke-width="1.25" opacity="0.58"/>
<path d="M506.1 310.3 L525.4 307.7" stroke="#8b6a66" stroke-width="1.12" opacity="0.62"/>
<path d="M780.9 303.4 L802.9 307.6" stroke="#9f7e79" stroke-width="1.15" opacity="0.41"/>
<path d="M347.1 293.7 L363.8 284.4" stroke="#aa8983" stroke-width="1.09" opacity="0.60"/>
<path d="M719.7 294.2 L743.4 304.1" stroke="#a2827c" stroke-width="1.71" opacity="0.56"/>
<path d="M566.3 288.4 L585.5 284.7" stroke="#92726d" stroke-width="1.22" opacity="0.58"/>
<path d="M479.5 288.6 L499.9 287.5" stroke="#82625d" stroke-width="1.24" opacity="0.60"/>
<path d="M536.5 268.0 L554.7 261.4" stroke="#7c5c58" stroke-width="1.16" opacity="0.38"/>
<path d="M736.3 288.3 L757.3 289.2" stroke="#9b7b75" stroke-width="1.74" opacity="0.40"/>
<path d="M396.4 315.2 L410.1 305.5" stroke="#a3837d" stroke-width="1.35" opacity="0.65"/>
<path d="M602.2 303.6 L624.5 296.8" stroke="#84645f" stroke-width="1.74" opacity="0.69"/>
<path d="M528.0 299.3 L557.4 291.4" stroke="#9a7974" stroke-width="1.87" opacity="0.35"/>
<path d="M680.7 287.7 L710.2 298.3" stroke="#8f6f6a" stroke-width="1.42" opacity="0.70"/>
<path d="M737.1 297.3 L758.4 303.1" stroke="#9c7b76" stroke-width="1.72" opacity="0.48"/>
<path d="M483.5 286.6 L503.0 283.3" stroke="#84645f" stroke-width="1.85" opacity="0.57"/>
<path d="M511.6 262.6 L528.0 260.3" stroke="#84645f" stroke-width="1.58" opacity="0.39"/>
<path d="M762.0 289.9 L786.2 306.0" stroke="#8c6c67" stroke-width="1.20" opacity="0.54"/>
<path d="M757.0 273.4 L781.1 274.2" stroke="#9a7a74" stroke-width="1.92" opacity="0.70"/>
<path d="M561.3 312.1 L584.1 307.3" stroke="#876762" stroke-width="1.39" opacity="0.51"/>
<path d="M590.8 273.0 L615.6 264.4" stroke="#856560" stroke-width="1.10" opacity="0.52"/>
<path d="M488.9 286.8 L518.0 280.2" stroke="#7d5d59" stroke-width="1.49" opacity="0.55"/>
<path d="M606.5 312.5 L629.8 308.9" stroke="#83635f" stroke-width="1.17" opacity="0.49"/>
<path d="M792.7 317.2 L807.6 322.8" stroke="#94746f" stroke-width="1.69" opacity="0.72"/>
<path d="M798.9 316.9 L815.0 321.8" stroke="#ab8a84" stroke-width="1.51" opacity="0.58"/>
<path d="M376.9 278.2 L397.7 264.5" stroke="#a1817b" stroke-width="1.99" opacity="0.64"/>
<path d="M300.3 316.5 L316.0 305.0" stroke="#9f7e79" stroke-width="1.00" opacity="0.49"/>
<path d="M721.0 293.1 L736.6 301.0" stroke="#987772" stroke-width="1.55" opacity="0.47"/>
<path d="M618.2 284.6 L641.1 276.3" stroke="#8d6d68" stroke-width="1.12" opacity="0.42"/>
<path d="M677.5 259.3 L694.5 260.5" stroke="#8c6c67" stroke-width="1.82" opacity="0.63"/>
<path d="M702.3 259.3 L730.1 259.6" stroke="#977771" stroke-width="1.72" opacity="0.51"/>
<path d="M367.1 285.8 L394.8 273.5" stroke="#9b7a75" stroke-width="1.35" opacity="0.55"/>
<path d="M480.9 255.7 L504.1 248.0" stroke="#7a5a56" stroke-width="1.44" opacity="0.63"/>
<path d="M409.1 260.7 L432.1 242.4" stroke="#9c7c76" stroke-width="1.90" opacity="0.72"/>
<path d="M437.7 291.7 L455.5 277.2" stroke="#856560" stroke-width="1.24" opacity="0.53"/>
<path d="M655.9 266.2 L685.0 272.6" stroke="#8b6b66" stroke-width="1.79" opacity="0.46"/>
<path d="M369.2 289.5 L397.7 276.0" stroke="#a5857f" stroke-width="1.56" opacity="0.40"/>
<path d="M558.8 274.2 L573.7 271.6" stroke="#93736e" stroke-width="1.83" opacity="0.51"/>
<path d="M406.8 269.6 L423.1 261.2" stroke="#a88781" stroke-width="1.66" opacity="0.50"/>
<path d="M360.0 308.3 L377.3 300.7" stroke="#94746f" stroke-width="1.13" opacity="0.55"/>
<path d="M717.9 304.7 L738.1 306.9" stroke="#91716c" stroke-width="1.38" opacity="0.78"/>
<path d="M387.4 315.9 L402.9 306.6" stroke="#a0807a" stroke-width="1.13" opacity="0.67"/>
<path d="M415.2 310.6 L432.5 299.5" stroke="#a4837d" stroke-width="1.61" opacity="0.45"/>
<path d="M736.9 271.6 L759.1 279.9" stroke="#a07f79" stroke-width="1.77" opacity="0.52"/>
<path d="M623.9 286.9 L644.7 283.9" stroke="#997974" stroke-width="1.18" opacity="0.73"/>
<path d="M446.9 294.8 L468.9 285.0" stroke="#997973" stroke-width="1.50" opacity="0.48"/>
<path d="M312.7 308.0 L327.3 300.9" stroke="#9d7c77" stroke-width="1.28" opacity="0.53"/>
<path d="M756.1 309.3 L780.2 326.3" stroke="#ab8a84" stroke-width="1.28" opacity="0.36"/>
<path d="M635.5 292.8 L656.6 289.4" stroke="#876762" stroke-width="1.70" opacity="0.46"/>
<path d="M723.4 280.7 L739.0 288.1" stroke="#a4847e" stroke-width="1.91" opacity="0.68"/>
<path d="M652.8 255.4 L669.7 255.9" stroke="#93736e" stroke-width="1.30" opacity="0.52"/>
<path d="M298.6 315.3 L313.0 305.7" stroke="#997974" stroke-width="1.57" opacity="0.67"/>
<path d="M412.0 283.4 L428.7 272.0" stroke="#aa8983" stroke-width="1.83" opacity="0.70"/>
<path d="M428.6 258.8 L448.4 243.6" stroke="#a2827c" stroke-width="1.24" opacity="0.40"/>
<path d="M694.3 266.0 L716.4 282.3" stroke="#9f7f79" stroke-width="1.69" opacity="0.53"/>
<path d="M671.2 302.2 L686.5 305.2" stroke="#83625e" stroke-width="1.42" opacity="0.77"/>
<path d="M641.8 297.2 L666.0 289.7" stroke="#90706b" stroke-width="1.05" opacity="0.66"/>
<path d="M503.3 283.2 L518.7 278.0" stroke="#82625d" stroke-width="1.04" opacity="0.67"/>
<path d="M701.8 270.7 L731.0 282.4" stroke="#8d6d68" stroke-width="1.54" opacity="0.46"/>
<path d="M309.2 311.0 L324.6 302.4" stroke="#ac8b85" stroke-width="1.14" opacity="0.67"/>
<path d="M630.6 267.3 L653.7 264.4" stroke="#896964" stroke-width="1.94" opacity="0.51"/>
<path d="M435.5 308.9 L457.4 298.8" stroke="#9e7d78" stroke-width="1.82" opacity="0.60"/>
<path d="M678.0 263.0 L700.2 274.1" stroke="#8f6e6a" stroke-width="1.77" opacity="0.72"/>
<path d="M338.2 297.0 L353.8 288.6" stroke="#b1918a" stroke-width="1.28" opacity="0.44"/>
<path d="M647.1 279.8 L666.8 278.1" stroke="#8d6d68" stroke-width="1.36" opacity="0.43"/>
<path d="M315.8 297.5 L336.9 279.8" stroke="#b2928b" stroke-width="1.72" opacity="0.79"/>
<path d="M574.5 257.7 L595.9 253.4" stroke="#8d6d68" stroke-width="1.54" opacity="0.35"/>
<path d="M761.7 304.3 L789.6 317.4" stroke="#987873" stroke-width="1.25" opacity="0.46"/>
<path d="M350.9 280.8 L374.5 263.7" stroke="#a68680" stroke-width="1.19" opacity="0.64"/>
<path d="M722.9 312.1 L750.8 315.4" stroke="#8f6e69" stroke-width="1.74" opacity="0.50"/>
<path d="M375.1 311.3 L393.3 301.6" stroke="#9d7d77" stroke-width="1.37" opacity="0.72"/>
<path d="M403.9 261.1 L425.3 247.6" stroke="#8b6b66" stroke-width="1.71" opacity="0.76"/>
<path d="M775.0 301.1 L790.9 306.8" stroke="#a68680" stroke-width="1.58" opacity="0.39"/>
<path d="M639.9 262.8 L670.8 257.0" stroke="#967671" stroke-width="1.04" opacity="0.55"/>
<path d="M378.4 305.4 L405.4 294.5" stroke="#92716c" stroke-width="1.79" opacity="0.54"/>
<path d="M427.0 295.9 L445.4 284.7" stroke="#9d7c77" stroke-width="1.44" opacity="0.65"/>
<path d="M712.5 309.4 L731.7 311.6" stroke="#9b7a75" stroke-width="1.56" opacity="0.51"/>
<path d="M380.8 271.7 L400.5 261.3" stroke="#8a6a65" stroke-width="1.91" opacity="0.74"/>
<path d="M790.5 321.3 L816.5 333.3" stroke="#b3928b" stroke-width="1.68" opacity="0.62"/>
<path d="M434.2 290.0 L451.8 275.7" stroke="#90706b" stroke-width="1.30" opacity="0.50"/>
<path d="M743.6 268.3 L769.6 271.8" stroke="#9a7974" stroke-width="1.09" opacity="0.65"/>
<path d="M473.7 288.5 L496.9 284.4" stroke="#8d6d68" stroke-width="1.40" opacity="0.40"/>
<path d="M372.9 314.8 L386.6 306.4" stroke="#93726d" stroke-width="1.25" opacity="0.39"/>
<path d="M557.2 265.9 L580.7 261.2" stroke="#8e6e69" stroke-width="1.57" opacity="0.40"/>
<path d="M547.9 286.5 L569.2 284.9" stroke="#987872" stroke-width="1.44" opacity="0.74"/>
<path d="M567.6 294.7 L583.0 290.3" stroke="#7a5a56" stroke-width="1.72" opacity="0.40"/>
<path d="M714.7 281.0 L745.7 284.8" stroke="#93736e" stroke-width="1.77" opacity="0.41"/>
<path d="M686.3 256.4 L706.7 259.8" stroke="#9f7f79" stroke-width="1.59" opacity="0.45"/>
<path d="M435.8 298.1 L461.8 283.3" stroke="#92716c" stroke-width="1.87" opacity="0.60"/>
<path d="M760.6 314.4 L787.8 317.6" stroke="#a5847e" stroke-width="1.76" opacity="0.66"/>
<path d="M712.3 265.4 L738.6 272.4" stroke="#83635e" stroke-width="1.72" opacity="0.37"/>
<path d="M595.6 257.8 L623.4 251.8" stroke="#91706b" stroke-width="1.93" opacity="0.65"/>
<path d="M411.9 269.2 L437.1 254.7" stroke="#93736e" stroke-width="1.11" opacity="0.36"/>
<path d="M336.1 317.1 L357.7 306.9" stroke="#ab8a84" stroke-width="1.69" opacity="0.52"/>
<path d="M353.9 317.0 L376.3 303.2" stroke="#977671" stroke-width="1.95" opacity="0.36"/>
<path d="M458.1 262.5 L487.2 256.6" stroke="#83635f" stroke-width="1.04" opacity="0.43"/>
<path d="M708.4 296.0 L730.1 302.1" stroke="#a3827d" stroke-width="1.85" opacity="0.53"/>
<path d="M737.2 297.5 L757.1 298.5" stroke="#a5847e" stroke-width="1.89" opacity="0.62"/>
<path d="M301.0 311.0 L320.7 300.3" stroke="#a2827c" stroke-width="1.39" opacity="0.51"/>
<path d="M281.1 328.8 L293.8 322.0" stroke="#a98882" stroke-width="1.99" opacity="0.37"/>
<path d="M354.7 307.8 L371.6 299.3" stroke="#a1807b" stroke-width="1.26" opacity="0.61"/>
<path d="M555.8 309.5 L569.6 304.5" stroke="#8b6b66" stroke-width="1.77" opacity="0.74"/>
<path d="M685.3 290.4 L703.8 299.2" stroke="#9b7a75" stroke-width="1.80" opacity="0.74"/>
<path d="M771.7 307.9 L798.8 313.8" stroke="#977671" stroke-width="1.51" opacity="0.64"/>
<path d="M462.3 287.0 L477.2 284.5" stroke="#977671" stroke-width="1.32" opacity="0.79"/>
<path d="M531.3 273.3 L549.3 271.0" stroke="#8c6c67" stroke-width="1.14" opacity="0.35"/>
<path d="M736.1 288.9 L759.2 296.3" stroke="#a0807a" stroke-width="1.17" opacity="0.38"/>
<path d="M436.6 274.0 L456.2 260.3" stroke="#83635f" stroke-width="1.34" opacity="0.76"/>
<path d="M584.8 256.3 L609.2 253.7" stroke="#7a5a56" stroke-width="1.36" opacity="0.70"/>
<path d="M503.3 305.3 L525.9 303.7" stroke="#81615c" stroke-width="1.28" opacity="0.47"/>
<path d="M290.1 317.4 L313.9 305.4" stroke="#b09089" stroke-width="1.40" opacity="0.44"/>
<path d="M595.1 304.3 L612.1 300.1" stroke="#84645f" stroke-width="1.96" opacity="0.62"/>
<path d="M319.7 320.6 L335.6 308.2" stroke="#b2918b" stroke-width="1.19" opacity="0.59"/>
<path d="M738.5 299.3 L752.7 310.0" stroke="#a1807b" stroke-width="1.75" opacity="0.64"/>
<path d="M491.2 294.0 L506.1 291.7" stroke="#91716c" stroke-width="1.05" opacity="0.63"/>
<path d="M454.0 284.0 L472.1 279.8" stroke="#93736e" stroke-width="1.01" opacity="0.77"/>
<path d="M574.7 311.6 L599.7 309.9" stroke="#856561" stroke-width="1.33" opacity="0.39"/>
<path d="M360.2 282.4 L372.8 273.2" stroke="#93736d" stroke-width="1.42" opacity="0.59"/>
<path d="M587.5 285.3 L611.6 279.3" stroke="#8e6e69" stroke-width="1.74" opacity="0.47"/>
<path d="M652.2 298.5 L669.0 308.6" stroke="#866661" stroke-width="1.98" opacity="0.55"/>
<path d="M424.4 287.8 L437.1 277.5" stroke="#a88782" stroke-width="1.48" opacity="0.64"/>
<path d="M685.2 274.4 L699.2 286.0" stroke="#876762" stroke-width="1.09" opacity="0.36"/>
<path d="M348.6 283.3 L369.1 270.9" stroke="#ab8a84" stroke-width="1.94" opacity="0.51"/>
<path d="M356.5 285.3 L381.5 267.6" stroke="#ab8a84" stroke-width="1.03" opacity="0.70"/>
<path d="M405.6 315.8 L427.4 302.7" stroke="#a2817c" stroke-width="1.80" opacity="0.56"/>
<path d="M448.3 309.5 L473.2 298.4" stroke="#a6857f" stroke-width="1.65" opacity="0.53"/>
<path d="M732.5 267.1 L752.2 275.3" stroke="#876762" stroke-width="1.94" opacity="0.63"/>
<path d="M395.9 275.3 L415.3 265.5" stroke="#a3827d" stroke-width="1.20" opacity="0.69"/>
<path d="M616.1 270.5 L632.9 264.4" stroke="#846460" stroke-width="1.16" opacity="0.74"/>
<path d="M735.2 278.9 L760.2 293.3" stroke="#a07f7a" stroke-width="1.33" opacity="0.57"/>
<path d="M746.6 276.5 L768.6 287.8" stroke="#9b7a75" stroke-width="1.58" opacity="0.75"/>
<path d="M388.4 312.2 L413.0 298.8" stroke="#91716c" stroke-width="1.18" opacity="0.74"/>
<path d="M801.3 304.1 L817.3 304.4" stroke="#91706b" stroke-width="1.01" opacity="0.76"/>
<path d="M357.3 310.2 L372.9 303.4" stroke="#9a7a75" stroke-width="1.09" opacity="0.50"/>
<path d="M761.1 307.4 L787.0 325.7" stroke="#af8e88" stroke-width="1.23" opacity="0.71"/>
<path d="M640.7 255.3 L658.5 251.6" stroke="#896964" stroke-width="1.10" opacity="0.36"/>
<path d="M799.2 303.7 L812.4 313.1" stroke="#a2817c" stroke-width="1.14" opacity="0.54"/>
<path d="M372.1 304.8 L396.9 293.4" stroke="#9f7e79" stroke-width="1.11" opacity="0.51"/>
<path d="M539.0 307.2 L556.7 304.4" stroke="#7c5c58" stroke-width="1.88" opacity="0.68"/>
<path d="M421.6 267.4 L435.2 260.6" stroke="#a5847e" stroke-width="1.51" opacity="0.53"/>
<path d="M570.8 273.2 L597.1 271.7" stroke="#80605c" stroke-width="1.54" opacity="0.60"/>
<path d="M641.1 311.8 L666.7 303.5" stroke="#94746f" stroke-width="1.32" opacity="0.54"/>
<path d="M789.8 301.3 L810.4 307.0" stroke="#ad8d86" stroke-width="2.00" opacity="0.35"/>
<path d="M597.7 308.1 L622.5 304.9" stroke="#92716c" stroke-width="1.24" opacity="0.44"/>
<path d="M339.1 318.2 L363.6 300.3" stroke="#b4938c" stroke-width="1.69" opacity="0.50"/>
<path d="M617.9 285.7 L649.1 281.1" stroke="#9c7b76" stroke-width="1.75" opacity="0.73"/>
<path d="M546.3 286.7 L563.5 280.5" stroke="#846460" stroke-width="1.74" opacity="0.52"/>
<path d="M652.6 276.5 L676.0 285.5" stroke="#856561" stroke-width="1.32" opacity="0.63"/>
<path d="M563.7 264.4 L581.9 260.0" stroke="#7a5a56" stroke-width="1.47" opacity="0.67"/>
<path d="M552.6 279.7 L569.0 277.8" stroke="#7a5a56" stroke-width="1.53" opacity="0.59"/>
<path d="M555.5 300.6 L572.4 298.5" stroke="#80605b" stroke-width="1.46" opacity="0.64"/>
<path d="M713.2 308.9 L725.4 317.3" stroke="#9d7d77" stroke-width="1.83" opacity="0.72"/>
<path d="M342.7 289.8 L356.9 282.7" stroke="#a6857f" stroke-width="1.80" opacity="0.58"/>
<path d="M516.2 256.5 L547.7 251.1" stroke="#7e5e5a" stroke-width="1.45" opacity="0.57"/>
<path d="M697.9 298.8 L724.0 301.5" stroke="#9a7a75" stroke-width="1.52" opacity="0.46"/>
<path d="M473.0 273.6 L487.2 271.3" stroke="#987872" stroke-width="1.57" opacity="0.38"/>
<path d="M371.9 306.5 L389.5 297.5" stroke="#a88882" stroke-width="1.83" opacity="0.39"/>
<path d="M612.6 304.3 L634.1 301.8" stroke="#83625e" stroke-width="1.62" opacity="0.52"/>
<path d="M301.1 316.8 L324.6 304.0" stroke="#ad8c86" stroke-width="1.41" opacity="0.64"/>
<path d="M704.5 276.6 L728.0 283.0" stroke="#84645f" stroke-width="1.19" opacity="0.79"/>
<path d="M652.5 275.2 L670.3 284.1" stroke="#9b7b75" stroke-width="1.76" opacity="0.52"/>
<path d="M554.6 281.0 L580.8 272.3" stroke="#987873" stroke-width="1.59" opacity="0.56"/>
<path d="M521.1 302.9 L543.3 299.0" stroke="#7f5f5b" stroke-width="1.44" opacity="0.57"/>
<path d="M547.2 301.1 L573.7 294.4" stroke="#8f6f6a" stroke-width="1.04" opacity="0.66"/>
<path d="M569.3 298.1 L584.8 293.6" stroke="#95746f" stroke-width="1.08" opacity="0.72"/>
<path d="M331.5 292.4 L351.2 278.4" stroke="#b2918b" stroke-width="1.68" opacity="0.67"/>
<path d="M531.9 253.9 L552.8 248.4" stroke="#80605c" stroke-width="2.00" opacity="0.72"/>
<path d="M736.6 272.7 L759.3 278.1" stroke="#a98882" stroke-width="1.99" opacity="0.47"/>
<path d="M416.0 275.9 L442.3 262.8" stroke="#94746f" stroke-width="1.51" opacity="0.54"/>
<path d="M304.9 311.9 L327.4 294.5" stroke="#987873" stroke-width="1.26" opacity="0.44"/>
<path d="M305.4 317.2 L325.0 306.4" stroke="#a68580" stroke-width="1.58" opacity="0.51"/>
<path d="M699.6 266.6 L718.8 281.0" stroke="#a1817b" stroke-width="1.31" opacity="0.59"/>
<path d="M493.1 286.9 L511.8 284.1" stroke="#82625e" stroke-width="1.29" opacity="0.67"/>
<path d="M700.1 289.5 L729.4 299.1" stroke="#977671" stroke-width="1.88" opacity="0.38"/>
<path d="M506.1 291.0 L535.6 289.0" stroke="#9c7b76" stroke-width="1.60" opacity="0.43"/>
<path d="M763.2 300.9 L782.7 313.0" stroke="#977772" stroke-width="1.67" opacity="0.48"/>
<path d="M389.0 309.6 L416.7 296.9" stroke="#a88782" stroke-width="1.10" opacity="0.39"/>
<path d="M690.5 309.1 L715.3 316.5" stroke="#9f7e79" stroke-width="1.91" opacity="0.66"/>
<path d="M359.4 278.7 L371.6 270.3" stroke="#92726d" stroke-width="1.29" opacity="0.45"/>
<path d="M584.2 270.8 L600.5 267.2" stroke="#7a5a56" stroke-width="1.32" opacity="0.73"/>
<path d="M357.9 313.0 L374.1 299.6" stroke="#b2918b" stroke-width="1.38" opacity="0.64"/>
<path d="M395.5 292.0 L416.0 283.1" stroke="#93726d" stroke-width="1.43" opacity="0.66"/>
<path d="M338.2 317.8 L366.1 305.2" stroke="#92716c" stroke-width="1.94" opacity="0.59"/>
<path d="M430.9 276.8 L449.6 263.5" stroke="#856460" stroke-width="1.09" opacity="0.57"/>
<path d="M732.5 295.9 L747.0 301.7" stroke="#a78680" stroke-width="1.27" opacity="0.75"/>
<path d="M722.7 273.7 L734.3 282.5" stroke="#92726d" stroke-width="1.97" opacity="0.50"/>
<path d="M774.8 307.5 L794.7 308.2" stroke="#a2817b" stroke-width="1.25" opacity="0.68"/>
<path d="M372.1 309.9 L385.6 302.9" stroke="#9d7d77" stroke-width="1.10" opacity="0.60"/>
<path d="M692.5 288.2 L706.3 292.9" stroke="#93736e" stroke-width="1.10" opacity="0.64"/>
<path d="M347.4 305.6 L365.7 295.7" stroke="#9c7b76" stroke-width="1.16" opacity="0.43"/>
<path d="M773.3 293.9 L798.0 310.4" stroke="#9f7e79" stroke-width="1.15" opacity="0.39"/>
<path d="M740.4 272.2 L762.6 280.2" stroke="#a6857f" stroke-width="1.47" opacity="0.42"/>
<path d="M559.7 281.7 L577.0 278.9" stroke="#8b6b66" stroke-width="1.20" opacity="0.41"/>
<path d="M404.2 309.4 L429.9 293.9" stroke="#ad8d86" stroke-width="1.94" opacity="0.57"/>
<path d="M694.1 287.1 L710.2 295.4" stroke="#8b6a66" stroke-width="1.15" opacity="0.47"/>
<path d="M294.3 318.9 L310.7 308.9" stroke="#987872" stroke-width="1.08" opacity="0.61"/>
<path d="M401.0 293.5 L422.7 277.7" stroke="#aa8a84" stroke-width="1.25" opacity="0.62"/>
<path d="M795.0 294.0 L819.1 305.0" stroke="#95746f" stroke-width="1.34" opacity="0.71"/>
<path d="M520.9 308.0 L551.8 306.2" stroke="#91716c" stroke-width="1.41" opacity="0.39"/>
<path d="M406.8 301.3 L420.6 291.9" stroke="#a0807a" stroke-width="1.14" opacity="0.44"/>
<path d="M393.5 280.5 L418.2 260.2" stroke="#906f6a" stroke-width="1.48" opacity="0.57"/>
<path d="M687.9 306.6 L709.9 319.4" stroke="#a0807a" stroke-width="1.63" opacity="0.73"/>
<path d="M691.8 258.5 L709.6 268.2" stroke="#9b7b75" stroke-width="1.97" opacity="0.65"/>
<path d="M670.2 261.0 L696.0 277.9" stroke="#7d5d59" stroke-width="1.74" opacity="0.72"/>
<path d="M699.9 289.3 L727.5 298.0" stroke="#8a6a65" stroke-width="1.87" opacity="0.48"/>
<path d="M783.5 304.7 L796.2 314.6" stroke="#8f6f6a" stroke-width="1.79" opacity="0.46"/>
<path d="M719.0 273.1 L741.0 276.2" stroke="#9e7e78" stroke-width="1.49" opacity="0.76"/>
<path d="M638.5 295.5 L666.2 290.8" stroke="#83635e" stroke-width="1.68" opacity="0.77"/>
<path d="M712.4 281.3 L738.1 282.9" stroke="#896964" stroke-width="1.34" opacity="0.62"/>
<path d="M717.9 304.0 L740.7 304.1" stroke="#aa8a83" stroke-width="1.11" opacity="0.72"/>
<path d="M498.2 289.2 L517.9 285.4" stroke="#977771" stroke-width="1.35" opacity="0.73"/>
<path d="M603.7 269.8 L622.6 268.3" stroke="#7e5e5a" stroke-width="1.44" opacity="0.65"/>
<path d="M702.6 262.8 L715.7 269.6" stroke="#866561" stroke-width="1.18" opacity="0.47"/>
<path d="M781.8 297.9 L811.4 302.6" stroke="#9b7b76" stroke-width="1.89" opacity="0.53"/>
<path d="M540.8 309.4 L572.0 303.0" stroke="#997873" stroke-width="1.83" opacity="0.42"/>
<path d="M555.3 250.4 L586.1 247.1" stroke="#83635e" stroke-width="1.81" opacity="0.46"/>
<path d="M463.3 259.1 L492.1 252.8" stroke="#8c6c67" stroke-width="1.38" opacity="0.77"/>
<path d="M748.1 302.5 L773.3 303.8" stroke="#9e7e78" stroke-width="1.96" opacity="0.51"/>
<path d="M625.8 290.8 L648.9 287.0" stroke="#856560" stroke-width="1.91" opacity="0.57"/>
<path d="M469.3 313.2 L498.3 311.2" stroke="#8d6d68" stroke-width="1.56" opacity="0.55"/>
<path d="M673.1 305.8 L697.1 319.2" stroke="#a4847e" stroke-width="1.33" opacity="0.41"/>
<path d="M779.3 317.6 L803.7 320.0" stroke="#9e7e78" stroke-width="1.05" opacity="0.53"/>
<path d="M671.1 291.1 L698.3 296.5" stroke="#987873" stroke-width="1.54" opacity="0.54"/>
<path d="M792.5 311.4 L814.7 325.4" stroke="#a68580" stroke-width="1.96" opacity="0.67"/>
<path d="M641.4 269.6 L665.6 267.2" stroke="#7d5d59" stroke-width="1.79" opacity="0.51"/>
<path d="M351.6 301.8 L364.9 291.4" stroke="#987873" stroke-width="1.17" opacity="0.49"/>
<path d="M306.1 311.1 L333.6 295.9" stroke="#94746f" stroke-width="1.19" opacity="0.49"/>
<path d="M774.4 288.9 L795.7 293.7" stroke="#ac8b85" stroke-width="1.26" opacity="0.53"/>
<path d="M480.8 312.0 L498.3 309.7" stroke="#84645f" stroke-width="1.45" opacity="0.73"/>
<path d="M613.1 299.4 L629.7 297.0" stroke="#83635e" stroke-width="1.47" opacity="0.60"/>
<path d="M630.7 298.1 L651.1 295.4" stroke="#7e5e5a" stroke-width="1.53" opacity="0.48"/>
<path d="M609.5 268.0 L623.6 263.9" stroke="#7a5a56" stroke-width="1.57" opacity="0.51"/>
<path d="M772.4 290.9 L787.4 293.5" stroke="#9c7b76" stroke-width="1.75" opacity="0.66"/>
<path d="M495.1 301.8 L514.6 300.2" stroke="#8a6a65" stroke-width="1.97" opacity="0.64"/>
<path d="M642.0 299.3 L672.5 294.1" stroke="#866661" stroke-width="1.34" opacity="0.53"/>
<path d="M701.8 275.8 L731.3 279.7" stroke="#92716c" stroke-width="1.52" opacity="0.65"/>
<path d="M752.2 277.3 L767.0 280.8" stroke="#9d7d77" stroke-width="1.50" opacity="0.73"/>
<path d="M629.3 287.7 L653.2 283.5" stroke="#93736e" stroke-width="1.84" opacity="0.70"/>
<path d="M719.0 268.6 L743.6 281.1" stroke="#94746f" stroke-width="1.90" opacity="0.75"/>
<path d="M668.8 301.7 L695.6 314.8" stroke="#a07f79" stroke-width="1.70" opacity="0.67"/>
<path d="M600.1 268.6 L624.9 266.8" stroke="#7a5a56" stroke-width="1.27" opacity="0.45"/>
<path d="M395.8 266.5 L421.9 248.7" stroke="#8d6d68" stroke-width="1.36" opacity="0.66"/>
<path d="M316.0 322.2 L328.4 315.6" stroke="#a1807b" stroke-width="1.14" opacity="0.47"/>
<path d="M309.1 313.4 L333.3 298.3" stroke="#b6958e" stroke-width="1.83" opacity="0.40"/>
<path d="M396.1 296.6 L413.7 287.2" stroke="#997973" stroke-width="1.22" opacity="0.71"/>
<path d="M387.9 309.8 L406.9 295.7" stroke="#af8e88" stroke-width="1.78" opacity="0.36"/>
<path d="M543.5 276.4 L568.7 274.6" stroke="#7f5f5b" stroke-width="1.58" opacity="0.53"/>
<path d="M547.4 286.5 L576.8 283.0" stroke="#7a5a56" stroke-width="1.80" opacity="0.78"/>
<path d="M451.3 314.4 L473.8 312.8" stroke="#a4837d" stroke-width="1.45" opacity="0.66"/>
<path d="M650.6 280.1 L667.5 284.2" stroke="#906f6a" stroke-width="1.28" opacity="0.44"/>
<path d="M665.1 283.7 L681.9 289.0" stroke="#876763" stroke-width="1.20" opacity="0.47"/>
<path d="M572.7 294.0 L598.6 284.8" stroke="#7a5a56" stroke-width="1.92" opacity="0.68"/>
<path d="M656.5 256.7 L670.6 258.8" stroke="#7c5c58" stroke-width="1.72" opacity="0.63"/>
<path d="M416.8 278.4 L439.8 267.7" stroke="#856560" stroke-width="1.31" opacity="0.37"/>
<path d="M370.1 289.1 L392.5 271.5" stroke="#9f7f79" stroke-width="1.10" opacity="0.40"/>
<path d="M358.9 311.8 L386.4 295.6" stroke="#92726d" stroke-width="1.79" opacity="0.56"/>
<path d="M710.3 265.2 L734.4 267.0" stroke="#92726d" stroke-width="1.21" opacity="0.46"/>
<path d="M289.2 328.9 L314.6 311.2" stroke="#967671" stroke-width="1.44" opacity="0.68"/>
<path d="M480.1 302.6 L495.7 297.7" stroke="#a3827c" stroke-width="1.21" opacity="0.61"/>
<path d="M477.3 253.0 L504.2 244.7" stroke="#8b6a66" stroke-width="1.04" opacity="0.75"/>
<path d="M559.0 254.8 L583.9 251.1" stroke="#7a5a56" stroke-width="1.48" opacity="0.64"/>
<path d="M386.2 278.1 L402.6 265.2" stroke="#a98882" stroke-width="1.59" opacity="0.41"/>
<path d="M383.2 290.4 L404.6 276.7" stroke="#95756f" stroke-width="1.44" opacity="0.38"/>
<path d="M659.1 256.2 L679.1 263.0" stroke="#83635e" stroke-width="1.71" opacity="0.46"/>
<path d="M619.7 294.3 L635.9 291.2" stroke="#7d5d59" stroke-width="1.60" opacity="0.38"/>
<path d="M403.5 316.1 L422.4 306.9" stroke="#92726d" stroke-width="1.82" opacity="0.64"/>
<path d="M668.1 255.3 L699.6 257.3" stroke="#805f5b" stroke-width="1.04" opacity="0.37"/>
<path d="M404.5 312.8 L427.9 301.4" stroke="#8d6c68" stroke-width="1.64" opacity="0.76"/>
<path d="M416.3 266.5 L441.9 256.0" stroke="#a3837d" stroke-width="1.97" opacity="0.67"/>
<path d="M376.3 310.1 L397.4 300.3" stroke="#ad8c86" stroke-width="1.79" opacity="0.75"/>
<path d="M760.0 274.4 L779.9 287.9" stroke="#8f6f6a" stroke-width="1.50" opacity="0.63"/>
<path d="M590.7 300.3 L605.7 299.2" stroke="#8a6965" stroke-width="1.29" opacity="0.53"/>
<path d="M282.0 329.4 L308.8 318.3" stroke="#9c7c76" stroke-width="1.46" opacity="0.40"/>
<path d="M619.9 265.1 L635.7 262.3" stroke="#7a5a56" stroke-width="1.55" opacity="0.51"/>
<path d="M327.5 316.4 L350.7 298.6" stroke="#b2928b" stroke-width="1.37" opacity="0.49"/>
<path d="M679.0 261.8 L707.9 274.7" stroke="#84645f" stroke-width="1.01" opacity="0.38"/>
<path d="M337.8 312.6 L357.4 300.0" stroke="#a5847e" stroke-width="1.41" opacity="0.62"/>
<path d="M619.2 307.8 L646.5 300.3" stroke="#7f5f5b" stroke-width="1.84" opacity="0.67"/>
<path d="M294.1 324.0 L311.4 310.9" stroke="#997973" stroke-width="1.18" opacity="0.77"/>
<path d="M510.4 295.0 L529.6 292.6" stroke="#92726d" stroke-width="1.32" opacity="0.39"/>
<path d="M511.0 312.0 L540.8 304.5" stroke="#866662" stroke-width="1.84" opacity="0.80"/>
<path d="M673.9 269.3 L695.0 273.0" stroke="#9f7e79" stroke-width="1.23" opacity="0.75"/>
<path d="M762.4 290.2 L786.4 304.5" stroke="#8e6e69" stroke-width="1.79" opacity="0.59"/>
<path d="M333.2 318.6 L355.6 306.9" stroke="#a98882" stroke-width="1.54" opacity="0.78"/>
<path d="M362.7 299.6 L382.5 286.4" stroke="#906f6a" stroke-width="1.41" opacity="0.76"/>
<path d="M640.8 310.9 L658.6 309.5" stroke="#987873" stroke-width="1.91" opacity="0.36"/>
<path d="M414.9 299.8 L428.1 288.8" stroke="#9b7b76" stroke-width="1.69" opacity="0.66"/>
<path d="M670.4 297.7 L688.8 300.9" stroke="#a3827d" stroke-width="1.69" opacity="0.44"/>
<path d="M414.5 314.4 L435.0 300.8" stroke="#957570" stroke-width="1.60" opacity="0.66"/>
<path d="M437.9 259.1 L451.0 253.5" stroke="#967570" stroke-width="1.14" opacity="0.40"/>
<path d="M537.7 310.4 L556.0 305.6" stroke="#846460" stroke-width="1.18" opacity="0.40"/>
<path d="M437.5 280.0 L455.6 267.6" stroke="#8b6b66" stroke-width="1.09" opacity="0.77"/>
<path d="M458.1 304.7 L486.9 302.9" stroke="#9e7d78" stroke-width="1.86" opacity="0.71"/>
<path d="M630.8 269.7 L648.2 268.7" stroke="#7a5a56" stroke-width="1.16" opacity="0.65"/>
<path d="M586.8 291.8 L603.2 290.1" stroke="#987872" stroke-width="1.98" opacity="0.52"/>
<path d="M621.1 287.0 L636.1 285.2" stroke="#9c7b76" stroke-width="1.85" opacity="0.41"/>
<path d="M784.6 298.9 L799.0 306.8" stroke="#957570" stroke-width="1.25" opacity="0.51"/>
<path d="M553.1 257.1 L581.2 253.6" stroke="#8a6a65" stroke-width="1.38" opacity="0.69"/>
<path d="M395.8 272.1 L414.6 262.9" stroke="#9e7d78" stroke-width="1.64" opacity="0.56"/>
<path d="M735.4 267.4 L761.4 280.4" stroke="#a0807a" stroke-width="1.03" opacity="0.55"/>
<path d="M338.9 303.4 L351.8 294.4" stroke="#b08f89" stroke-width="1.48" opacity="0.43"/>
<path d="M399.4 285.0 L413.3 278.8" stroke="#9f7e79" stroke-width="1.47" opacity="0.77"/>
<path d="M569.8 255.2 L597.0 252.0" stroke="#805f5b" stroke-width="1.87" opacity="0.78"/>
<path d="M729.3 269.0 L747.8 283.3" stroke="#9f7f79" stroke-width="1.17" opacity="0.74"/>
<path d="M389.7 268.2 L417.1 254.4" stroke="#9b7a75" stroke-width="1.73" opacity="0.38"/>
<path d="M516.3 270.7 L542.1 267.8" stroke="#8d6c68" stroke-width="1.12" opacity="0.79"/>
<path d="M531.3 261.7 L557.0 260.2" stroke="#846460" stroke-width="1.02" opacity="0.56"/>
<path d="M667.5 284.9 L690.2 288.6" stroke="#8c6b67" stroke-width="1.65" opacity="0.42"/>
<path d="M700.7 310.0 L726.3 324.6" stroke="#9c7c76" stroke-width="1.90" opacity="0.43"/>
<path d="M397.3 294.5 L409.5 285.0" stroke="#a5857f" stroke-width="1.04" opacity="0.55"/>
<path d="M351.9 287.6 L371.8 273.3" stroke="#906f6b" stroke-width="1.40" opacity="0.66"/>
<path d="M284.6 330.3 L304.9 320.3" stroke="#a78781" stroke-width="1.95" opacity="0.57"/>
<path d="M799.7 310.5 L828.4 314.9" stroke="#ad8c86" stroke-width="2.00" opacity="0.56"/>
<path d="M397.0 315.3 L415.9 305.3" stroke="#a3827d" stroke-width="1.67" opacity="0.36"/>
<path d="M474.7 262.5 L488.1 258.4" stroke="#876763" stroke-width="1.26" opacity="0.55"/>
<path d="M573.5 294.6 L591.8 292.9" stroke="#987772" stroke-width="1.96" opacity="0.42"/>
<path d="M350.1 302.4 L375.4 286.3" stroke="#b1908a" stroke-width="1.23" opacity="0.43"/>
<path d="M586.0 279.0 L615.6 273.9" stroke="#81615d" stroke-width="1.86" opacity="0.78"/>
<path d="M419.5 312.9 L432.5 305.6" stroke="#8b6b66" stroke-width="1.10" opacity="0.36"/>
<path d="M430.4 273.3 L453.3 254.5" stroke="#977671" stroke-width="1.53" opacity="0.73"/>
<path d="M702.5 293.5 L717.6 299.1" stroke="#9f7e79" stroke-width="1.66" opacity="0.61"/>
<path d="M699.4 307.1 L713.0 318.0" stroke="#a68680" stroke-width="1.90" opacity="0.61"/>
<path d="M373.5 304.9 L389.8 296.7" stroke="#a4837d" stroke-width="1.52" opacity="0.65"/>
<path d="M316.6 319.1 L335.4 306.8" stroke="#9f7e79" stroke-width="1.80" opacity="0.35"/>
<path d="M528.0 292.7 L552.8 286.0" stroke="#967671" stroke-width="1.96" opacity="0.70"/>
<path d="M400.5 284.1 L414.2 272.9" stroke="#9d7c77" stroke-width="1.96" opacity="0.76"/>
<path d="M400.3 301.8 L423.1 289.4" stroke="#92726d" stroke-width="1.13" opacity="0.45"/>
<path d="M391.1 277.7 L406.2 271.4" stroke="#9d7d77" stroke-width="1.42" opacity="0.39"/>
<path d="M584.3 308.9 L604.2 304.4" stroke="#866561" stroke-width="1.44" opacity="0.43"/>
<path d="M531.4 251.6 L547.7 247.4" stroke="#876763" stroke-width="1.96" opacity="0.70"/>
<path d="M717.5 295.5 L741.6 307.0" stroke="#876762" stroke-width="1.20" opacity="0.69"/>
<path d="M436.2 270.9 L456.1 256.0" stroke="#866661" stroke-width="1.88" opacity="0.61"/>
<path d="M382.3 267.5 L405.4 253.3" stroke="#a2827c" stroke-width="1.07" opacity="0.35"/>
<path d="M369.1 306.0 L385.9 299.1" stroke="#a88781" stroke-width="1.71" opacity="0.79"/>
<path d="M288.2 318.7 L312.7 299.0" stroke="#b3928c" stroke-width="1.34" opacity="0.59"/>
<path d="M446.4 279.9 L462.5 270.4" stroke="#a2827c" stroke-width="1.08" opacity="0.42"/>
<path d="M326.1 313.1 L341.5 302.5" stroke="#997974" stroke-width="1.73" opacity="0.50"/>
<path d="M536.7 262.0 L559.5 254.2" stroke="#95746f" stroke-width="1.15" opacity="0.66"/>
<path d="M480.6 296.7 L508.8 293.3" stroke="#856561" stroke-width="1.09" opacity="0.61"/>
<path d="M378.6 304.6 L401.3 287.8" stroke="#a88781" stroke-width="1.09" opacity="0.65"/>
<path d="M575.2 259.5 L599.5 256.8" stroke="#91706b" stroke-width="1.63" opacity="0.46"/>
<path d="M414.0 282.6 L437.0 268.4" stroke="#a88882" stroke-width="1.72" opacity="0.45"/>
<path d="M431.0 294.3 L451.6 280.2" stroke="#886863" stroke-width="1.20" opacity="0.49"/>
<path d="M626.5 268.5 L644.5 266.8" stroke="#7d5d59" stroke-width="1.83" opacity="0.67"/>
<path d="M782.3 314.3 L801.5 318.5" stroke="#997973" stroke-width="1.06" opacity="0.62"/>
<path d="M324.9 294.2 L339.2 285.5" stroke="#93736e" stroke-width="1.88" opacity="0.56"/>
<path d="M382.0 273.1 L402.0 261.0" stroke="#a07f7a" stroke-width="1.72" opacity="0.59"/>
<path d="M685.9 259.3 L706.8 260.3" stroke="#8f6e6a" stroke-width="1.25" opacity="0.65"/>
<path d="M394.7 279.5 L417.8 265.8" stroke="#90706b" stroke-width="1.37" opacity="0.55"/>
<path d="M765.9 317.8 L780.3 324.5" stroke="#a1817b" stroke-width="1.64" opacity="0.48"/>
<path d="M297.7 328.8 L310.5 318.7" stroke="#a88882" stroke-width="1.62" opacity="0.48"/>
<path d="M314.1 320.0 L331.8 307.2" stroke="#b4938d" stroke-width="1.39" opacity="0.39"/>
<path d="M784.8 287.5 L812.1 293.1" stroke="#ac8b85" stroke-width="1.11" opacity="0.38"/>
<path d="M364.3 299.2 L377.9 289.0" stroke="#ab8a84" stroke-width="1.76" opacity="0.54"/>
<path d="M455.8 261.0 L487.1 257.1" stroke="#9c7b76" stroke-width="1.26" opacity="0.68"/>
<path d="M747.1 314.4 L776.6 324.5" stroke="#9a7974" stroke-width="1.29" opacity="0.56"/>
<path d="M654.6 296.7 L672.1 298.3" stroke="#7f5f5b" stroke-width="1.11" opacity="0.72"/>
<path d="M456.2 268.7 L478.5 265.8" stroke="#7d5d59" stroke-width="1.15" opacity="0.73"/>
<path d="M447.0 264.9 L463.4 253.2" stroke="#9b7b75" stroke-width="1.42" opacity="0.72"/>
<path d="M732.0 294.6 L759.7 294.8" stroke="#957570" stroke-width="1.90" opacity="0.78"/>
<path d="M450.0 306.0 L468.0 300.6" stroke="#9a7a74" stroke-width="1.37" opacity="0.51"/>
<path d="M477.0 259.2 L507.1 255.6" stroke="#8e6d68" stroke-width="1.64" opacity="0.75"/>
<path d="M675.4 267.5 L698.2 284.5" stroke="#7c5c58" stroke-width="1.73" opacity="0.69"/>
<path d="M705.6 271.1 L724.3 280.4" stroke="#876662" stroke-width="1.13" opacity="0.59"/>
<path d="M455.0 304.1 L483.8 299.6" stroke="#886863" stroke-width="1.88" opacity="0.41"/>
<path d="M771.5 310.5 L794.4 322.2" stroke="#b08f89" stroke-width="1.87" opacity="0.60"/>
<path d="M517.7 272.0 L544.6 264.1" stroke="#7a5a56" stroke-width="1.21" opacity="0.50"/>
<path d="M409.2 264.0 L421.9 257.3" stroke="#8b6b66" stroke-width="1.23" opacity="0.38"/>
<path d="M313.6 319.9 L333.7 310.2" stroke="#a98882" stroke-width="1.80" opacity="0.78"/>
<path d="M441.0 293.3 L458.7 279.4" stroke="#866662" stroke-width="1.73" opacity="0.49"/>
<path d="M737.7 295.6 L762.2 297.4" stroke="#8e6e69" stroke-width="1.52" opacity="0.57"/>
<path d="M497.0 306.3 L514.2 301.9" stroke="#95756f" stroke-width="1.36" opacity="0.78"/>
<path d="M644.0 260.5 L657.9 255.8" stroke="#856460" stroke-width="1.43" opacity="0.67"/>
<path d="M503.8 257.2 L532.0 251.3" stroke="#7c5c58" stroke-width="1.36" opacity="0.45"/>
<path d="M669.8 300.6 L699.3 305.1" stroke="#80605c" stroke-width="1.43" opacity="0.52"/>
<path d="M651.4 308.5 L670.6 311.2" stroke="#987772" stroke-width="1.73" opacity="0.43"/>
<path d="M565.7 281.5 L581.7 277.4" stroke="#7a5a56" stroke-width="2.00" opacity="0.60"/>
<path d="M696.3 264.9 L715.5 279.1" stroke="#876762" stroke-width="1.87" opacity="0.51"/>
<path d="M764.0 285.4 L787.1 285.7" stroke="#8e6e69" stroke-width="1.90" opacity="0.78"/>
<path d="M546.7 307.8 L562.9 304.2" stroke="#886863" stroke-width="1.80" opacity="0.54"/>
<path d="M594.7 267.5 L616.1 264.6" stroke="#846460" stroke-width="1.47" opacity="0.39"/>
<path d="M281.0 327.6 L303.5 311.8" stroke="#b1908a" stroke-width="1.26" opacity="0.58"/>
<path d="M370.3 301.2 L384.1 290.2" stroke="#9c7b76" stroke-width="1.72" opacity="0.69"/>
<path d="M652.6 295.4 L681.1 300.9" stroke="#80605c" stroke-width="1.05" opacity="0.77"/>
<path d="M510.8 256.6 L539.1 254.5" stroke="#7f5f5b" stroke-width="1.14" opacity="0.56"/>
<path d="M614.0 312.7 L641.4 308.5" stroke="#987872" stroke-width="1.20" opacity="0.42"/>
<path d="M493.7 290.1 L510.5 287.7" stroke="#987772" stroke-width="1.08" opacity="0.44"/>
<path d="M444.1 285.3 L464.6 275.7" stroke="#957570" stroke-width="1.97" opacity="0.57"/>
<path d="M775.0 300.1 L799.4 303.5" stroke="#ac8b85" stroke-width="1.17" opacity="0.38"/>
<path d="M646.9 310.8 L667.0 307.3" stroke="#94746f" stroke-width="1.35" opacity="0.66"/>
<path d="M484.1 261.6 L507.3 254.2" stroke="#9b7b76" stroke-width="1.85" opacity="0.68"/>
<path d="M464.5 291.9 L484.6 285.1" stroke="#94736e" stroke-width="1.30" opacity="0.60"/>
<path d="M626.6 297.0 L642.3 291.6" stroke="#92716c" stroke-width="1.85" opacity="0.71"/>
<path d="M588.4 292.8 L619.0 288.1" stroke="#886863" stroke-width="1.40" opacity="0.43"/>
<path d="M338.7 320.4 L350.4 311.8" stroke="#aa8983" stroke-width="1.48" opacity="0.57"/>
<path d="M469.2 308.2 L492.5 304.5" stroke="#84645f" stroke-width="1.64" opacity="0.56"/>
<path d="M453.0 277.5 L480.3 271.0" stroke="#997974" stroke-width="1.37" opacity="0.52"/>
<path d="M468.9 309.3 L487.4 305.3" stroke="#9a7974" stroke-width="1.82" opacity="0.42"/>
<path d="M640.9 254.3 L655.9 252.7" stroke="#7b5b57" stroke-width="1.15" opacity="0.45"/>
<path d="M308.3 309.1 L330.3 293.5" stroke="#967670" stroke-width="1.95" opacity="0.60"/>
<path d="M762.9 279.7 L780.4 292.8" stroke="#a68680" stroke-width="1.75" opacity="0.74"/>
<path d="M480.9 258.0 L507.1 249.6" stroke="#866661" stroke-width="1.98" opacity="0.37"/>
<path d="M307.4 306.1 L332.2 295.9" stroke="#a07f7a" stroke-width="1.11" opacity="0.42"/>
<path d="M373.2 300.8 L399.2 283.2" stroke="#a3837d" stroke-width="1.98" opacity="0.55"/>
<path d="M483.6 267.9 L514.9 264.1" stroke="#7a5a56" stroke-width="1.71" opacity="0.43"/>
<path d="M372.6 278.2 L396.6 265.3" stroke="#ac8c85" stroke-width="1.53" opacity="0.66"/>
<path d="M295.7 319.1 L315.3 304.7" stroke="#a88781" stroke-width="1.88" opacity="0.62"/>
<path d="M455.3 277.9 L483.1 268.3" stroke="#82615d" stroke-width="1.56" opacity="0.41"/>
<path d="M370.1 290.5 L381.7 282.5" stroke="#93736e" stroke-width="1.79" opacity="0.58"/>
<path d="M281.0 330.1 L303.6 317.3" stroke="#a5857f" stroke-width="1.73" opacity="0.53"/>
<path d="M782.9 320.4 L802.9 335.5" stroke="#a88882" stroke-width="1.38" opacity="0.47"/>
<path d="M753.4 309.7 L777.9 324.7" stroke="#8c6c67" stroke-width="1.69" opacity="0.49"/>
<path d="M676.5 268.5 L691.8 275.5" stroke="#81615d" stroke-width="1.49" opacity="0.47"/>
<path d="M763.4 279.6 L785.4 296.3" stroke="#a88782" stroke-width="1.76" opacity="0.61"/>
<path d="M755.2 300.1 L784.6 309.2" stroke="#ac8b85" stroke-width="1.78" opacity="0.40"/>
<path d="M423.5 263.5 L440.9 250.1" stroke="#8b6b66" stroke-width="1.26" opacity="0.68"/>
<path d="M619.2 258.5 L645.7 253.2" stroke="#8f6f6a" stroke-width="1.65" opacity="0.48"/>
<path d="M472.9 309.6 L503.1 299.1" stroke="#967570" stroke-width="1.57" opacity="0.71"/>
<path d="M677.0 280.0 L694.5 292.1" stroke="#80605b" stroke-width="1.47" opacity="0.40"/>
<path d="M672.0 261.6 L685.3 268.4" stroke="#7b5b57" stroke-width="1.54" opacity="0.68"/>
<path d="M347.0 308.2 L363.2 299.3" stroke="#967671" stroke-width="1.03" opacity="0.57"/>
<path d="M323.7 321.2 L335.2 312.2" stroke="#a68580" stroke-width="1.47" opacity="0.67"/>
<path d="M661.5 273.4 L675.3 283.9" stroke="#9a7974" stroke-width="1.81" opacity="0.40"/>
<path d="M375.8 294.7 L390.8 286.7" stroke="#8e6e69" stroke-width="1.47" opacity="0.70"/>
<path d="M409.6 311.6 L436.8 298.3" stroke="#977772" stroke-width="1.97" opacity="0.70"/>
<path d="M609.8 284.5 L630.8 277.9" stroke="#977772" stroke-width="1.91" opacity="0.71"/>
<path d="M636.7 297.6 L658.9 294.9" stroke="#82625e" stroke-width="1.96" opacity="0.77"/>
<path d="M362.4 306.8 L380.5 295.5" stroke="#ac8b85" stroke-width="1.14" opacity="0.56"/>
<path d="M537.4 266.9 L561.1 263.1" stroke="#7c5c58" stroke-width="1.59" opacity="0.42"/>
<path d="M744.1 286.1 L768.9 305.8" stroke="#a78680" stroke-width="1.58" opacity="0.79"/>
<path d="M480.5 286.2 L494.9 284.1" stroke="#997973" stroke-width="1.12" opacity="0.48"/>
<path d="M609.1 286.3 L634.0 277.7" stroke="#8e6e69" stroke-width="1.95" opacity="0.64"/>
<path d="M563.7 303.7 L583.6 298.7" stroke="#886863" stroke-width="1.30" opacity="0.79"/>
<path d="M406.5 315.2 L419.5 309.7" stroke="#9a7a74" stroke-width="1.21" opacity="0.58"/>
<path d="M340.2 317.8 L362.0 303.0" stroke="#94736e" stroke-width="1.99" opacity="0.66"/>
<path d="M653.1 253.1 L674.8 253.9" stroke="#7a5a56" stroke-width="1.31" opacity="0.61"/>
<path d="M282.7 326.7 L302.0 311.5" stroke="#9b7b76" stroke-width="1.01" opacity="0.44"/>
<path d="M372.3 312.1 L400.4 299.6" stroke="#a88781" stroke-width="1.88" opacity="0.58"/>
<path d="M448.2 313.3 L471.3 300.3" stroke="#a68680" stroke-width="1.83" opacity="0.79"/>
<path d="M336.1 315.1 L351.0 307.5" stroke="#a88882" stroke-width="1.66" opacity="0.78"/>
<path d="M800.8 317.6 L824.2 328.5" stroke="#b08f89" stroke-width="1.73" opacity="0.60"/>
<path d="M466.8 308.5 L483.2 306.4" stroke="#a07f7a" stroke-width="1.15" opacity="0.61"/>
<path d="M699.3 264.2 L722.1 272.6" stroke="#8f6e6a" stroke-width="1.41" opacity="0.59"/>
<path d="M286.0 320.4 L301.8 311.4" stroke="#9d7d77" stroke-width="1.24" opacity="0.72"/>
<path d="M405.0 264.0 L423.1 253.3" stroke="#9d7c77" stroke-width="1.77" opacity="0.45"/>
<path d="M630.4 303.1 L653.1 298.8" stroke="#7f5f5b" stroke-width="1.60" opacity="0.43"/>
<path d="M314.6 300.4 L328.3 293.1" stroke="#9e7e78" stroke-width="1.42" opacity="0.49"/>
<path d="M547.4 308.1 L564.1 306.0" stroke="#94746f" stroke-width="1.32" opacity="0.76"/>
<path d="M649.5 278.6 L664.2 277.1" stroke="#997974" stroke-width="1.85" opacity="0.64"/>
<path d="M360.4 304.5 L381.6 295.5" stroke="#a68580" stroke-width="1.10" opacity="0.68"/>
<path d="M655.0 283.4 L680.9 286.5" stroke="#906f6b" stroke-width="1.66" opacity="0.39"/>
<path d="M752.8 271.2 L773.7 274.5" stroke="#a4847e" stroke-width="1.09" opacity="0.66"/>
<path d="M800.8 304.7 L826.4 309.5" stroke="#ac8b85" stroke-width="1.40" opacity="0.66"/>
<path d="M504.6 261.1 L528.3 259.4" stroke="#7a5a56" stroke-width="1.92" opacity="0.39"/>
<path d="M542.2 280.4 L568.1 277.6" stroke="#886863" stroke-width="1.81" opacity="0.48"/>
<path d="M769.2 313.1 L784.9 318.5" stroke="#a0807a" stroke-width="1.13" opacity="0.66"/>
<path d="M644.9 287.5 L658.8 282.6" stroke="#856560" stroke-width="1.80" opacity="0.40"/>
<path d="M447.4 257.6 L470.2 243.1" stroke="#94746f" stroke-width="1.70" opacity="0.52"/>
<path d="M652.6 269.5 L669.6 283.3" stroke="#9c7c77" stroke-width="1.09" opacity="0.68"/>
<path d="M732.8 298.1 L762.4 301.3" stroke="#92726d" stroke-width="1.12" opacity="0.52"/>
<path d="M631.2 253.2 L651.5 251.9" stroke="#7a5a56" stroke-width="2.00" opacity="0.49"/>
<path d="M756.1 309.8 L776.3 323.8" stroke="#8d6d68" stroke-width="1.64" opacity="0.78"/>
<path d="M575.6 263.1 L597.9 258.5" stroke="#896964" stroke-width="1.37" opacity="0.58"/>
<path d="M587.3 265.1 L610.2 262.0" stroke="#84645f" stroke-width="1.42" opacity="0.65"/>
<path d="M375.5 296.3 L400.4 283.7" stroke="#967671" stroke-width="1.78" opacity="0.58"/>
<path d="M409.0 312.4 L426.7 301.6" stroke="#a3827d" stroke-width="1.40" opacity="0.67"/>
<path d="M708.6 284.9 L724.1 293.6" stroke="#977671" stroke-width="1.36" opacity="0.49"/>
<path d="M467.1 299.5 L484.2 294.8" stroke="#9c7b76" stroke-width="1.78" opacity="0.64"/>
<path d="M633.7 291.1 L651.9 286.2" stroke="#9c7c76" stroke-width="1.36" opacity="0.36"/>
<path d="M784.0 304.6 L812.0 318.8" stroke="#957570" stroke-width="1.23" opacity="0.50"/>
<path d="M335.1 317.1 L353.7 304.0" stroke="#a88882" stroke-width="1.27" opacity="0.57"/>
<path d="M652.5 306.4 L677.1 322.9" stroke="#93736e" stroke-width="1.42" opacity="0.49"/>
<path d="M790.4 294.7 L809.4 296.8" stroke="#91706b" stroke-width="1.85" opacity="0.50"/>
<path d="M726.0 310.6 L742.7 315.8" stroke="#91706b" stroke-width="1.37" opacity="0.40"/>
<path d="M752.9 292.4 L776.6 299.2" stroke="#a4847e" stroke-width="1.02" opacity="0.53"/>
<path d="M477.5 253.1 L504.8 248.6" stroke="#8f6f6a" stroke-width="1.68" opacity="0.63"/>
<path d="M377.1 269.9 L397.8 255.8" stroke="#a2827c" stroke-width="1.20" opacity="0.73"/>
<path d="M756.3 283.7 L778.6 293.3" stroke="#a1817b" stroke-width="1.04" opacity="0.50"/>
<path d="M617.0 288.8 L632.8 285.6" stroke="#95746f" stroke-width="1.31" opacity="0.54"/>
<path d="M469.0 308.6 L500.7 305.8" stroke="#9d7c77" stroke-width="1.86" opacity="0.46"/>
<path d="M586.9 274.5 L615.2 272.7" stroke="#7b5b57" stroke-width="1.27" opacity="0.70"/>
<path d="M530.0 311.7 L550.8 310.3" stroke="#987873" stroke-width="1.62" opacity="0.70"/>
<path d="M721.0 291.0 L748.3 298.6" stroke="#a6857f" stroke-width="1.26" opacity="0.69"/>
<path d="M509.7 312.8 L531.9 311.1" stroke="#9a7a75" stroke-width="1.00" opacity="0.39"/>
<path d="M325.9 304.5 L345.9 293.0" stroke="#ab8a84" stroke-width="1.70" opacity="0.58"/>
<path d="M794.4 297.4 L815.9 305.4" stroke="#a5847f" stroke-width="1.86" opacity="0.44"/>
<path d="M739.6 284.6 L764.0 290.5" stroke="#977671" stroke-width="1.28" opacity="0.39"/>
<path d="M780.4 297.8 L806.2 299.8" stroke="#9e7e78" stroke-width="1.33" opacity="0.50"/>
<path d="M722.5 279.8 L752.4 288.8" stroke="#9b7b75" stroke-width="1.40" opacity="0.42"/>
<path d="M626.5 292.8 L647.4 288.9" stroke="#967570" stroke-width="1.79" opacity="0.56"/>
<path d="M715.6 280.3 L728.2 287.4" stroke="#9f7f79" stroke-width="1.96" opacity="0.66"/>
<path d="M633.4 282.8 L650.6 279.4" stroke="#967671" stroke-width="1.65" opacity="0.66"/>
<path d="M414.1 295.6 L436.9 285.3" stroke="#a5847e" stroke-width="1.51" opacity="0.49"/>
<path d="M567.6 259.0 L592.3 254.1" stroke="#906f6b" stroke-width="1.31" opacity="0.66"/>
<path d="M565.3 288.6 L588.6 281.8" stroke="#93726d" stroke-width="1.44" opacity="0.72"/>
<path d="M576.1 297.2 L597.9 293.7" stroke="#7a5a56" stroke-width="1.82" opacity="0.64"/>
<path d="M334.0 310.6 L362.5 298.7" stroke="#92726d" stroke-width="1.73" opacity="0.47"/>
<path d="M722.9 271.0 L742.5 283.8" stroke="#a78680" stroke-width="1.89" opacity="0.55"/>
<path d="M714.7 297.6 L742.2 308.4" stroke="#a2827c" stroke-width="1.90" opacity="0.50"/>
<path d="M291.7 319.2 L305.8 313.2" stroke="#a2817c" stroke-width="1.12" opacity="0.42"/>
<path d="M431.9 272.6 L455.6 253.7" stroke="#866661" stroke-width="1.99" opacity="0.55"/>
<path d="M696.6 270.6 L719.4 287.9" stroke="#896964" stroke-width="1.23" opacity="0.39"/>
<path d="M764.6 300.8 L791.4 313.0" stroke="#ab8a84" stroke-width="1.70" opacity="0.56"/>
<path d="M691.5 279.9 L722.4 284.2" stroke="#9a7a74" stroke-width="1.74" opacity="0.72"/>
<path d="M408.3 298.9 L424.1 290.1" stroke="#a4847e" stroke-width="1.95" opacity="0.52"/>
<path d="M546.2 281.1 L573.7 279.4" stroke="#7f5f5b" stroke-width="1.88" opacity="0.51"/>
<path d="M388.3 283.1 L409.4 268.2" stroke="#9e7e78" stroke-width="1.52" opacity="0.42"/>
<path d="M761.2 296.3 L787.6 306.1" stroke="#a88781" stroke-width="1.72" opacity="0.51"/>
<path d="M705.3 262.0 L730.3 266.9" stroke="#92726d" stroke-width="1.38" opacity="0.61"/>
<path d="M392.5 286.8 L418.8 276.1" stroke="#a4837d" stroke-width="1.83" opacity="0.60"/>
<path d="M594.4 289.8 L622.3 287.3" stroke="#91706b" stroke-width="1.86" opacity="0.70"/>
<path d="M634.7 301.8 L660.4 297.1" stroke="#7e5e5a" stroke-width="1.19" opacity="0.40"/>
<path d="M494.7 283.4 L512.6 281.6" stroke="#7f5f5b" stroke-width="1.39" opacity="0.42"/>
<path d="M374.2 299.0 L394.6 289.3" stroke="#9d7c77" stroke-width="1.44" opacity="0.58"/>
<path d="M718.2 261.0 L732.2 271.6" stroke="#a4837d" stroke-width="1.77" opacity="0.61"/>
</g>
</g>
<!-- upper lid pink -->
<path d="M312 440 C400 405 460 392 540 390 C600 390 640 396 675 415 C705 435 728 470 738 512 L716 514 C695 480 660 450 600 436 C540 426 470 430 420 447 C390 457 350 470 320 474 Z" fill="#d69ea6" opacity="0.85" filter="url(#b3)"/>
<ellipse cx="540" cy="413" rx="75" ry="9" fill="#efd3d8" opacity="0.45" filter="url(#b3)"/>
<path d="M640 425 C675 442 700 468 715 500" stroke="#cf8f99" stroke-width="9" fill="none" opacity="0.35" filter="url(#b3)"/>
<!-- lower lid pink -->
<path d="M322 476 C360 490 400 497 436 482 C470 510 520 525 580 530 C620 532 650 530 670 526 C650 550 610 566 560 566 C480 564 420 545 370 520 C350 506 335 492 322 476Z" fill="#d3a0a8" opacity="0.65" filter="url(#b3)"/>
<path d="M390 515 C440 540 500 555 580 556" stroke="#c98a98" stroke-width="8" fill="none" opacity="0.5" filter="url(#b3)"/>
<path d="M600 540 C640 540 680 530 716 514" stroke="#efe4e8" stroke-width="10" fill="none" opacity="0.6" filter="url(#b3)"/>
<g><circle cx="354.5" cy="410.4" r="0.89" fill="#fff" opacity="0.39"/><circle cx="621.5" cy="450.3" r="1.04" fill="#fff" opacity="0.23"/><circle cx="413.8" cy="517.5" r="0.56" fill="#fff" opacity="0.32"/><circle cx="639.0" cy="523.4" r="0.70" fill="#fff" opacity="0.26"/><circle cx="477.4" cy="529.3" r="0.76" fill="#fff" opacity="0.25"/><circle cx="632.1" cy="500.3" r="1.14" fill="#fff" opacity="0.58"/><circle cx="721.9" cy="476.0" r="1.06" fill="#fff" opacity="0.32"/><circle cx="459.8" cy="468.9" r="1.15" fill="#fff" opacity="0.56"/><circle cx="429.3" cy="461.9" r="0.76" fill="#fff" opacity="0.35"/><circle cx="494.1" cy="466.7" r="0.64" fill="#fff" opacity="0.43"/><circle cx="670.7" cy="495.0" r="1.09" fill="#fff" opacity="0.43"/><circle cx="397.7" cy="535.4" r="1.12" fill="#fff" opacity="0.31"/><circle cx="329.8" cy="490.4" r="0.88" fill="#fff" opacity="0.43"/><circle cx="745.2" cy="515.5" r="1.06" fill="#fff" opacity="0.23"/><circle cx="560.6" cy="540.8" r="0.56" fill="#fff" opacity="0.23"/><circle cx="644.3" cy="561.3" r="0.56" fill="#fff" opacity="0.45"/><circle cx="383.3" cy="533.0" r="0.95" fill="#fff" opacity="0.30"/><circle cx="417.0" cy="536.6" r="0.87" fill="#fff" opacity="0.51"/><circle cx="493.5" cy="457.5" r="1.18" fill="#fff" opacity="0.47"/><circle cx="537.2" cy="494.4" r="1.00" fill="#fff" opacity="0.48"/><circle cx="722.6" cy="471.0" r="1.08" fill="#fff" opacity="0.47"/><circle cx="695.5" cy="544.1" r="1.08" fill="#fff" opacity="0.56"/><circle cx="741.4" cy="513.5" r="0.87" fill="#fff" opacity="0.48"/><circle cx="673.0" cy="473.0" r="0.79" fill="#fff" opacity="0.26"/><circle cx="646.1" cy="578.3" r="0.76" fill="#fff" opacity="0.27"/><circle cx="409.9" cy="473.6" r="0.70" fill="#fff" opacity="0.59"/><circle cx="346.1" cy="452.1" r="0.58" fill="#fff" opacity="0.46"/><circle cx="661.4" cy="428.2" r="0.54" fill="#fff" opacity="0.38"/><circle cx="577.0" cy="563.2" r="0.53" fill="#fff" opacity="0.24"/><circle cx="401.2" cy="435.2" r="0.66" fill="#fff" opacity="0.49"/><circle cx="581.7" cy="436.4" r="0.63" fill="#fff" opacity="0.31"/><circle cx="395.9" cy="535.1" r="0.72" fill="#fff" opacity="0.42"/><circle cx="679.5" cy="483.7" r="0.68" fill="#fff" opacity="0.55"/><circle cx="722.3" cy="458.3" r="0.88" fill="#fff" opacity="0.58"/><circle cx="532.3" cy="435.9" r="0.53" fill="#fff" opacity="0.58"/><circle cx="672.6" cy="466.2" r="0.87" fill="#fff" opacity="0.41"/><circle cx="440.8" cy="578.2" r="0.96" fill="#fff" opacity="0.30"/><circle cx="324.8" cy="482.4" r="0.76" fill="#fff" opacity="0.52"/><circle cx="633.8" cy="507.1" r="0.61" fill="#fff" opacity="0.26"/><circle cx="461.6" cy="443.0" r="1.11" fill="#fff" opacity="0.41"/><circle cx="600.3" cy="578.7" r="0.69" fill="#fff" opacity="0.41"/><circle cx="386.3" cy="537.5" r="0.50" fill="#fff" opacity="0.53"/><circle cx="692.3" cy="547.1" r="0.56" fill="#fff" opacity="0.31"/><circle cx="635.3" cy="413.0" r="0.84" fill="#fff" opacity="0.39"/><circle cx="740.4" cy="503.5" r="1.10" fill="#fff" opacity="0.32"/><circle cx="667.3" cy="472.1" r="1.14" fill="#fff" opacity="0.24"/><circle cx="683.6" cy="433.6" r="0.88" fill="#fff" opacity="0.41"/><circle cx="389.3" cy="548.9" r="0.72" fill="#fff" opacity="0.32"/><circle cx="353.5" cy="451.6" r="0.83" fill="#fff" opacity="0.49"/><circle cx="478.3" cy="522.1" r="0.57" fill="#fff" opacity="0.36"/><circle cx="523.2" cy="573.9" r="1.08" fill="#fff" opacity="0.46"/><circle cx="325.4" cy="464.8" r="1.00" fill="#fff" opacity="0.29"/><circle cx="568.2" cy="479.7" r="0.51" fill="#fff" opacity="0.60"/><circle cx="671.8" cy="433.2" r="0.93" fill="#fff" opacity="0.32"/><circle cx="485.4" cy="494.9" r="0.71" fill="#fff" opacity="0.33"/><circle cx="492.6" cy="518.3" r="0.68" fill="#fff" opacity="0.28"/><circle cx="641.8" cy="455.9" r="1.16" fill="#fff" opacity="0.43"/><circle cx="638.5" cy="456.4" r="1.08" fill="#fff" opacity="0.24"/><circle cx="382.0" cy="412.5" r="0.97" fill="#fff" opacity="0.48"/><circle cx="399.1" cy="469.4" r="1.09" fill="#fff" opacity="0.44"/><circle cx="359.6" cy="436.9" r="0.61" fill="#fff" opacity="0.25"/><circle cx="499.0" cy="408.4" r="1.14" fill="#fff" opacity="0.37"/><circle cx="545.1" cy="514.7" r="1.04" fill="#fff" opacity="0.53"/><circle cx="489.8" cy="456.3" r="0.79" fill="#fff" opacity="0.21"/><circle cx="496.3" cy="524.5" r="1.19" fill="#fff" opacity="0.52"/><circle cx="610.5" cy="507.6" r="0.51" fill="#fff" opacity="0.33"/><circle cx="470.6" cy="515.4" r="0.57" fill="#fff" opacity="0.35"/><circle cx="544.1" cy="540.9" r="1.08" fill="#fff" opacity="0.44"/><circle cx="389.7" cy="536.8" r="1.13" fill="#fff" opacity="0.42"/><circle cx="475.1" cy="487.6" r="0.60" fill="#fff" opacity="0.49"/><circle cx="754.2" cy="490.5" r="1.00" fill="#fff" opacity="0.53"/><circle cx="406.8" cy="569.8" r="0.94" fill="#fff" opacity="0.28"/><circle cx="356.6" cy="440.3" r="0.90" fill="#fff" opacity="0.48"/><circle cx="464.8" cy="566.9" r="0.75" fill="#fff" opacity="0.39"/><circle cx="374.6" cy="575.1" r="0.59" fill="#fff" opacity="0.56"/><circle cx="559.1" cy="498.7" r="0.89" fill="#fff" opacity="0.31"/><circle cx="720.1" cy="578.5" r="1.07" fill="#fff" opacity="0.44"/><circle cx="374.0" cy="547.6" r="0.70" fill="#fff" opacity="0.56"/><circle cx="426.0" cy="501.1" r="1.08" fill="#fff" opacity="0.27"/><circle cx="561.1" cy="409.1" r="0.52" fill="#fff" opacity="0.27"/><circle cx="754.3" cy="568.8" r="0.96" fill="#fff" opacity="0.32"/><circle cx="615.3" cy="531.5" r="0.77" fill="#fff" opacity="0.44"/><circle cx="673.7" cy="398.0" r="0.64" fill="#fff" opacity="0.39"/><circle cx="382.9" cy="466.5" r="0.90" fill="#fff" opacity="0.27"/><circle cx="548.7" cy="443.8" r="0.90" fill="#fff" opacity="0.33"/><circle cx="602.4" cy="402.0" r="0.97" fill="#fff" opacity="0.26"/><circle cx="742.1" cy="506.0" r="0.83" fill="#fff" opacity="0.36"/><circle cx="594.5" cy="522.5" r="1.03" fill="#fff" opacity="0.50"/><circle cx="533.7" cy="579.0" r="1.09" fill="#fff" opacity="0.54"/><circle cx="500.0" cy="475.3" r="0.90" fill="#fff" opacity="0.56"/><circle cx="551.4" cy="492.1" r="0.80" fill="#fff" opacity="0.56"/><circle cx="461.1" cy="405.1" r="1.01" fill="#fff" opacity="0.56"/><circle cx="642.1" cy="505.5" r="1.03" fill="#fff" opacity="0.32"/><circle cx="581.1" cy="407.9" r="0.59" fill="#fff" opacity="0.38"/><circle cx="541.2" cy="468.4" r="0.54" fill="#fff" opacity="0.48"/><circle cx="551.5" cy="439.2" r="0.71" fill="#fff" opacity="0.36"/><circle cx="423.8" cy="407.7" r="1.14" fill="#fff" opacity="0.59"/><circle cx="612.9" cy="555.3" r="0.79" fill="#fff" opacity="0.52"/><circle cx="417.6" cy="533.1" r="0.90" fill="#fff" opacity="0.56"/><circle cx="363.4" cy="541.6" r="0.59" fill="#fff" opacity="0.42"/><circle cx="738.4" cy="395.1" r="0.67" fill="#fff" opacity="0.32"/><circle cx="462.9" cy="406.6" r="1.13" fill="#fff" opacity="0.53"/><circle cx="494.8" cy="461.0" r="0.91" fill="#fff" opacity="0.22"/><circle cx="333.7" cy="561.2" r="0.72" fill="#fff" opacity="0.40"/><circle cx="730.9" cy="575.8" r="0.83" fill="#fff" opacity="0.28"/><circle cx="450.0" cy="565.7" r="1.13" fill="#fff" opacity="0.28"/><circle cx="688.7" cy="460.5" r="0.83" fill="#fff" opacity="0.27"/><circle cx="707.1" cy="579.1" r="0.64" fill="#fff" opacity="0.45"/><circle cx="404.3" cy="557.8" r="0.54" fill="#fff" opacity="0.24"/><circle cx="639.3" cy="452.9" r="1.13" fill="#fff" opacity="0.55"/><circle cx="633.8" cy="420.0" r="0.99" fill="#fff" opacity="0.58"/><circle cx="515.9" cy="409.6" r="0.66" fill="#fff" opacity="0.32"/><circle cx="632.6" cy="431.3" r="0.63" fill="#fff" opacity="0.29"/><circle cx="612.4" cy="541.2" r="0.76" fill="#fff" opacity="0.46"/><circle cx="709.2" cy="504.1" r="0.66" fill="#fff" opacity="0.32"/><circle cx="727.8" cy="518.4" r="0.69" fill="#fff" opacity="0.46"/><circle cx="359.6" cy="576.9" r="0.81" fill="#fff" opacity="0.41"/><circle cx="553.6" cy="403.4" r="0.92" fill="#fff" opacity="0.31"/><circle cx="430.4" cy="543.6" r="0.56" fill="#fff" opacity="0.31"/><circle cx="652.5" cy="440.5" r="0.70" fill="#fff" opacity="0.42"/><circle cx="402.0" cy="561.0" r="1.19" fill="#fff" opacity="0.21"/><circle cx="523.1" cy="533.9" r="0.77" fill="#fff" opacity="0.57"/><circle cx="540.0" cy="428.3" r="0.89" fill="#fff" opacity="0.46"/><circle cx="478.2" cy="516.8" r="1.05" fill="#fff" opacity="0.41"/><circle cx="542.5" cy="551.4" r="0.98" fill="#fff" opacity="0.41"/><circle cx="738.7" cy="427.2" r="1.05" fill="#fff" opacity="0.27"/><circle cx="587.6" cy="438.5" r="0.81" fill="#fff" opacity="0.51"/><circle cx="666.1" cy="541.4" r="0.67" fill="#fff" opacity="0.40"/><circle cx="417.3" cy="502.3" r="0.85" fill="#fff" opacity="0.21"/><circle cx="582.6" cy="527.2" r="0.90" fill="#fff" opacity="0.55"/><circle cx="399.2" cy="423.1" r="0.51" fill="#fff" opacity="0.40"/><circle cx="511.2" cy="476.7" r="0.68" fill="#fff" opacity="0.52"/><circle cx="351.9" cy="562.9" r="0.90" fill="#fff" opacity="0.42"/><circle cx="668.3" cy="439.0" r="0.60" fill="#fff" opacity="0.32"/><circle cx="338.6" cy="453.2" r="0.93" fill="#fff" opacity="0.41"/><circle cx="436.5" cy="503.9" r="0.56" fill="#fff" opacity="0.53"/><circle cx="395.5" cy="442.1" r="0.61" fill="#fff" opacity="0.48"/><circle cx="685.6" cy="540.5" r="0.54" fill="#fff" opacity="0.36"/><circle cx="480.3" cy="435.0" r="1.18" fill="#fff" opacity="0.22"/><circle cx="535.4" cy="535.8" r="1.19" fill="#fff" opacity="0.26"/><circle cx="520.3" cy="532.8" r="0.53" fill="#fff" opacity="0.30"/><circle cx="711.6" cy="421.2" r="0.78" fill="#fff" opacity="0.32"/><circle cx="506.8" cy="409.2" r="0.52" fill="#fff" opacity="0.60"/><circle cx="655.8" cy="530.8" r="0.66" fill="#fff" opacity="0.30"/><circle cx="562.8" cy="439.7" r="0.82" fill="#fff" opacity="0.57"/><circle cx="480.2" cy="457.4" r="1.19" fill="#fff" opacity="0.44"/><circle cx="337.5" cy="469.6" r="0.95" fill="#fff" opacity="0.22"/><circle cx="471.0" cy="523.5" r="1.11" fill="#fff" opacity="0.44"/><circle cx="710.0" cy="480.6" r="0.78" fill="#fff" opacity="0.54"/><circle cx="487.7" cy="539.5" r="0.65" fill="#fff" opacity="0.34"/><circle cx="400.8" cy="496.7" r="0.61" fill="#fff" opacity="0.28"/><circle cx="414.4" cy="481.5" r="0.72" fill="#fff" opacity="0.38"/><circle cx="757.1" cy="520.7" r="1.10" fill="#fff" opacity="0.28"/><circle cx="488.5" cy="408.5" r="0.98" fill="#fff" opacity="0.35"/><circle cx="440.8" cy="398.4" r="0.63" fill="#fff" opacity="0.30"/><circle cx="492.9" cy="565.9" r="1.00" fill="#fff" opacity="0.31"/><circle cx="478.9" cy="423.4" r="1.16" fill="#fff" opacity="0.34"/><circle cx="656.9" cy="528.8" r="1.13" fill="#fff" opacity="0.21"/><circle cx="461.7" cy="466.1" r="0.56" fill="#fff" opacity="0.55"/><circle cx="463.1" cy="537.6" r="0.86" fill="#fff" opacity="0.22"/></g>
<!-- eye white -->
<path d="M434 479 C450 466 470 456 490 450 L630 452 C660 462 690 480 712 508 C690 518 660 523 620 525 C590 528 560 528 540 526 C500 520 460 502 434 479Z" fill="#e1ebf4" filter="url(#b1)"/>
<path d="M434 479 C460 500 500 520 540 526 C580 530 640 526 712 508" stroke="#c8b4bc" stroke-width="2" fill="none" opacity="0.6" filter="url(#b1)"/>
<path d="M445 492 C480 515 520 528 560 531 C610 533 660 526 712 512" stroke="#eee3e7" stroke-width="5" fill="none" opacity="0.75" filter="url(#b1)"/>
<g filter="url(#b1s)"><path d="M439.6 524.5 L432.3 523.0" stroke="#8c6c78" stroke-width="0.94" opacity="0.43"/><path d="M590.2 540.2 L582.2 539.8" stroke="#b8a8b0" stroke-width="0.95" opacity="0.43"/><path d="M400.8 515.2 L395.0 514.4" stroke="#8c6c78" stroke-width="0.73" opacity="0.63"/><path d="M455.7 528.0 L451.2 530.4" stroke="#8c6c78" stroke-width="1.20" opacity="0.61"/><path d="M610.0 539.7 L603.7 543.0" stroke="#b8a8b0" stroke-width="0.86" opacity="0.52"/><path d="M427.8 521.7 L419.1 522.6" stroke="#8c6c78" stroke-width="0.78" opacity="0.64"/><path d="M430.0 522.2 L421.3 522.3" stroke="#8c6c78" stroke-width="0.98" opacity="0.47"/><path d="M516.3 537.4 L512.0 539.6" stroke="#8c6c78" stroke-width="1.13" opacity="0.43"/><path d="M587.3 540.3 L583.0 537.6" stroke="#b8a8b0" stroke-width="1.15" opacity="0.61"/><path d="M583.1 540.4 L576.5 538.4" stroke="#b8a8b0" stroke-width="0.76" opacity="0.52"/><path d="M598.5 540.0 L594.1 537.5" stroke="#b8a8b0" stroke-width="1.14" opacity="0.49"/><path d="M487.7 533.8 L481.4 534.3" stroke="#8c6c78" stroke-width="1.20" opacity="0.49"/><path d="M406.4 516.5 L402.2 515.3" stroke="#8c6c78" stroke-width="1.20" opacity="0.52"/><path d="M518.0 537.5 L511.6 535.3" stroke="#8c6c78" stroke-width="0.81" opacity="0.56"/><path d="M533.6 538.8 L526.8 541.0" stroke="#8c6c78" stroke-width="0.79" opacity="0.47"/><path d="M622.5 539.4 L616.8 538.6" stroke="#b8a8b0" stroke-width="0.85" opacity="0.39"/><path d="M415.8 518.8 L408.2 516.0" stroke="#8c6c78" stroke-width="0.89" opacity="0.59"/><path d="M562.2 540.9 L555.0 536.4" stroke="#b8a8b0" stroke-width="0.90" opacity="0.70"/><path d="M630.7 539.2 L624.6 536.0" stroke="#b8a8b0" stroke-width="0.95" opacity="0.48"/><path d="M459.3 528.7 L451.4 531.5" stroke="#8c6c78" stroke-width="0.73" opacity="0.63"/><path d="M585.7 540.4 L579.9 537.7" stroke="#b8a8b0" stroke-width="0.73" opacity="0.44"/><path d="M469.6 530.5 L463.8 532.5" stroke="#8c6c78" stroke-width="0.73" opacity="0.47"/><path d="M615.8 539.6 L607.3 536.8" stroke="#b8a8b0" stroke-width="0.94" opacity="0.44"/><path d="M630.1 539.2 L623.8 537.3" stroke="#b8a8b0" stroke-width="0.71" opacity="0.42"/><path d="M601.2 540.0 L594.1 536.3" stroke="#b8a8b0" stroke-width="1.00" opacity="0.50"/><path d="M539.5 539.3 L531.4 540.7" stroke="#8c6c78" stroke-width="0.97" opacity="0.45"/><path d="M584.4 540.4 L580.5 539.4" stroke="#b8a8b0" stroke-width="1.18" opacity="0.36"/><path d="M542.5 539.5 L536.0 536.4" stroke="#b8a8b0" stroke-width="0.99" opacity="0.44"/><path d="M497.3 535.5 L489.6 531.3" stroke="#8c6c78" stroke-width="0.77" opacity="0.38"/><path d="M422.5 520.4 L418.4 520.5" stroke="#8c6c78" stroke-width="0.77" opacity="0.65"/><path d="M557.3 540.8 L552.7 540.4" stroke="#b8a8b0" stroke-width="0.86" opacity="0.52"/><path d="M452.7 527.5 L448.1 529.0" stroke="#8c6c78" stroke-width="0.89" opacity="0.60"/><path d="M532.0 538.7 L527.9 537.5" stroke="#8c6c78" stroke-width="1.14" opacity="0.62"/><path d="M589.8 540.3 L585.7 540.2" stroke="#b8a8b0" stroke-width="0.73" opacity="0.62"/><path d="M442.1 525.1 L434.7 526.9" stroke="#8c6c78" stroke-width="1.05" opacity="0.46"/><path d="M410.1 517.4 L404.2 518.4" stroke="#8c6c78" stroke-width="1.15" opacity="0.45"/><path d="M520.7 537.7 L515.0 534.2" stroke="#8c6c78" stroke-width="0.75" opacity="0.56"/><path d="M522.0 537.8 L515.5 533.7" stroke="#8c6c78" stroke-width="0.86" opacity="0.59"/><path d="M526.2 538.2 L520.1 541.1" stroke="#8c6c78" stroke-width="1.11" opacity="0.69"/><path d="M485.3 533.3 L480.7 530.2" stroke="#8c6c78" stroke-width="0.75" opacity="0.38"/><path d="M417.6 519.2 L410.0 516.5" stroke="#8c6c78" stroke-width="0.92" opacity="0.57"/><path d="M404.7 516.1 L397.5 516.3" stroke="#8c6c78" stroke-width="0.96" opacity="0.49"/><path d="M496.4 535.3 L491.8 537.7" stroke="#8c6c78" stroke-width="0.92" opacity="0.44"/><path d="M569.0 540.8 L561.3 538.4" stroke="#b8a8b0" stroke-width="0.93" opacity="0.43"/><path d="M492.5 534.6 L486.2 533.4" stroke="#8c6c78" stroke-width="1.18" opacity="0.38"/><path d="M515.1 537.3 L508.9 535.4" stroke="#8c6c78" stroke-width="1.15" opacity="0.62"/><path d="M550.4 540.2 L542.9 538.4" stroke="#b8a8b0" stroke-width="1.13" opacity="0.59"/><path d="M563.9 540.9 L559.4 538.3" stroke="#b8a8b0" stroke-width="0.89" opacity="0.57"/><path d="M598.0 540.1 L590.7 535.1" stroke="#b8a8b0" stroke-width="0.70" opacity="0.46"/><path d="M474.8 531.5 L469.2 533.6" stroke="#8c6c78" stroke-width="0.98" opacity="0.38"/><path d="M472.6 531.1 L464.3 528.3" stroke="#8c6c78" stroke-width="0.93" opacity="0.39"/><path d="M629.4 539.3 L622.2 541.4" stroke="#b8a8b0" stroke-width="0.87" opacity="0.57"/><path d="M563.6 540.9 L559.1 538.1" stroke="#b8a8b0" stroke-width="0.86" opacity="0.44"/><path d="M602.9 539.9 L598.3 538.8" stroke="#b8a8b0" stroke-width="0.80" opacity="0.56"/><path d="M466.6 530.0 L461.5 526.9" stroke="#8c6c78" stroke-width="0.93" opacity="0.50"/><path d="M548.1 540.0 L543.0 541.7" stroke="#b8a8b0" stroke-width="0.89" opacity="0.45"/><path d="M445.2 525.9 L437.4 530.0" stroke="#8c6c78" stroke-width="1.11" opacity="0.68"/><path d="M569.1 540.8 L565.0 540.6" stroke="#b8a8b0" stroke-width="0.72" opacity="0.56"/><path d="M568.1 540.8 L563.6 543.4" stroke="#b8a8b0" stroke-width="0.97" opacity="0.38"/><path d="M474.2 531.3 L468.6 528.4" stroke="#8c6c78" stroke-width="0.89" opacity="0.40"/><path d="M590.0 540.2 L581.9 539.6" stroke="#b8a8b0" stroke-width="0.72" opacity="0.42"/><path d="M496.7 535.4 L490.2 537.2" stroke="#8c6c78" stroke-width="1.10" opacity="0.65"/><path d="M622.0 539.4 L614.7 543.5" stroke="#b8a8b0" stroke-width="0.99" opacity="0.38"/><path d="M615.9 539.6 L608.6 537.0" stroke="#b8a8b0" stroke-width="0.79" opacity="0.37"/><path d="M595.6 540.1 L588.7 538.8" stroke="#b8a8b0" stroke-width="0.94" opacity="0.63"/><path d="M481.1 532.6 L475.8 533.3" stroke="#8c6c78" stroke-width="0.85" opacity="0.57"/><path d="M613.6 539.7 L609.7 541.5" stroke="#b8a8b0" stroke-width="0.96" opacity="0.59"/><path d="M445.5 525.9 L440.7 528.3" stroke="#8c6c78" stroke-width="0.72" opacity="0.52"/><path d="M563.4 540.9 L556.5 543.4" stroke="#b8a8b0" stroke-width="0.75" opacity="0.68"/><path d="M529.3 538.4 L523.4 536.9" stroke="#8c6c78" stroke-width="1.06" opacity="0.53"/></g>
<path d="M530 543 C570 547 610 545 640 540" stroke="#f0e8ec" stroke-width="2.5" fill="none" opacity="0.55" filter="url(#b1s)"/>
<clipPath id="eyeclip"><path d="M434 479 C450 462 470 440 500 432 L630 436 C660 455 690 480 712 508 C690 518 660 523 620 525 C590 528 560 528 540 526 C500 520 460 502 434 479Z"/></clipPath>
<g clip-path="url(#eyeclip)">
 <ellipse cx="558" cy="462" rx="64" ry="62" fill="url(#iris)" filter="url(#b1)"/>
 <linearGradient id="itop" gradientUnits="userSpaceOnUse" x1="0" y1="435" x2="0" y2="505"><stop offset="0" stop-color="#0e0707" stop-opacity="0.95"/><stop offset="0.5" stop-color="#160a08" stop-opacity="0.6"/><stop offset="1" stop-color="#160a08" stop-opacity="0"/></linearGradient>
 <ellipse cx="558" cy="462" rx="63" ry="61" fill="url(#itop)" filter="url(#b1)"/>
 <path d="M690 480 C700 490 708 500 712 508 L690 515Z" fill="#d8c0c4" opacity="0.5"/>
</g>
<!-- caruncle -->
<path d="M690 484 C702 490 712 500 717 512 C710 517 702 519 696 516 C691 507 688 495 690 484Z" fill="#9a4a44" opacity="0.8" filter="url(#b1)"/>
<!-- upper lash line -->
<linearGradient id="lg" gradientUnits="userSpaceOnUse" x1="590" y1="0" x2="712" y2="0"><stop offset="0" stop-color="#1b1315"/><stop offset="0.6" stop-color="#2e2226"/><stop offset="1" stop-color="#6a5056"/></linearGradient>
<path d="M320 474 C350 468 392 458 430 443 C480 428 540 424 590 427 C628 431 662 448 688 472 C698 482 706 494 710 504 C700 494 690 484 680 476 C660 462 645 455 625 451 C590 445 540 444 490 450 C462 458 448 470 434 479 C410 487 385 488 365 484 C348 481 334 478 320 474Z" fill="url(#lg)" filter="url(#b1)"/>
<g filter="url(#b1)" stroke-linecap="round" opacity="0.7"><path d="M457.6 440.6 Q454.1 434.6 454.6 430.6" stroke="#2b2224" stroke-width="0.98" opacity="0.60" fill="none"/><path d="M492.7 435.4 Q489.6 430.8 490.5 428.2" stroke="#2b2224" stroke-width="1.08" opacity="0.72" fill="none"/><path d="M364.5 466.3 Q359.9 462.0 359.3 459.7" stroke="#2b2224" stroke-width="1.19" opacity="0.68" fill="none"/><path d="M350.9 469.4 Q347.0 461.7 347.1 456.0" stroke="#2b2224" stroke-width="1.09" opacity="0.65" fill="none"/><path d="M380.9 462.7 Q377.6 458.9 378.2 457.2" stroke="#2b2224" stroke-width="0.74" opacity="0.48" fill="none"/><path d="M402.9 457.0 Q399.4 453.3 399.9 451.5" stroke="#2b2224" stroke-width="0.96" opacity="0.74" fill="none"/><path d="M475.0 437.5 Q470.4 431.6 469.8 427.7" stroke="#2b2224" stroke-width="1.10" opacity="0.58" fill="none"/><path d="M412.3 454.2 Q408.5 446.5 408.7 440.7" stroke="#2b2224" stroke-width="1.20" opacity="0.68" fill="none"/><path d="M422.0 451.3 Q417.9 447.0 417.7 444.7" stroke="#2b2224" stroke-width="0.74" opacity="0.71" fill="none"/><path d="M444.1 444.7 Q438.9 438.2 437.7 433.6" stroke="#2b2224" stroke-width="1.27" opacity="0.74" fill="none"/><path d="M340.1 471.7 Q337.0 467.1 337.9 464.4" stroke="#2b2224" stroke-width="0.98" opacity="0.79" fill="none"/><path d="M443.3 444.9 Q440.0 440.9 440.6 438.9" stroke="#2b2224" stroke-width="1.17" opacity="0.51" fill="none"/><path d="M362.7 466.7 Q359.5 461.6 360.3 458.4" stroke="#2b2224" stroke-width="1.15" opacity="0.45" fill="none"/><path d="M404.1 456.7 Q399.9 453.0 399.8 451.4" stroke="#2b2224" stroke-width="1.18" opacity="0.47" fill="none"/><path d="M485.4 436.2 Q481.4 430.9 481.3 427.6" stroke="#2b2224" stroke-width="1.14" opacity="0.45" fill="none"/><path d="M507.4 433.6 Q504.2 429.3 505.1 427.0" stroke="#2b2224" stroke-width="0.83" opacity="0.51" fill="none"/><path d="M592.4 430.2 Q588.1 423.4 587.7 418.7" stroke="#2b2224" stroke-width="1.23" opacity="0.48" fill="none"/><path d="M442.5 445.1 Q437.9 438.3 437.3 433.4" stroke="#2b2224" stroke-width="0.76" opacity="0.80" fill="none"/><path d="M395.4 459.3 Q392.0 454.5 392.6 451.7" stroke="#2b2224" stroke-width="0.90" opacity="0.52" fill="none"/><path d="M359.1 467.5 Q355.6 463.5 356.2 461.5" stroke="#2b2224" stroke-width="0.85" opacity="0.64" fill="none"/><path d="M436.6 446.9 Q433.3 441.3 434.0 437.7" stroke="#2b2224" stroke-width="0.99" opacity="0.63" fill="none"/><path d="M565.3 430.9 Q561.7 426.5 562.0 424.2" stroke="#2b2224" stroke-width="1.25" opacity="0.73" fill="none"/><path d="M404.9 456.4 Q401.5 451.9 402.1 449.4" stroke="#2b2224" stroke-width="1.26" opacity="0.48" fill="none"/><path d="M587.0 430.3 Q583.4 423.0 583.7 417.7" stroke="#2b2224" stroke-width="0.95" opacity="0.44" fill="none"/><path d="M350.1 469.5 Q344.2 462.9 342.4 458.2" stroke="#2b2224" stroke-width="1.12" opacity="0.50" fill="none"/><path d="M554.2 431.1 Q550.1 425.2 550.0 421.2" stroke="#2b2224" stroke-width="0.81" opacity="0.69" fill="none"/><path d="M357.9 467.8 Q354.2 463.3 354.4 460.8" stroke="#2b2224" stroke-width="1.21" opacity="0.65" fill="none"/><path d="M412.9 454.0 Q407.0 447.6 405.2 443.1" stroke="#2b2224" stroke-width="0.71" opacity="0.51" fill="none"/><path d="M455.9 441.1 Q452.0 437.5 452.1 435.9" stroke="#2b2224" stroke-width="0.92" opacity="0.63" fill="none"/><path d="M374.2 464.2 Q370.9 458.9 371.5 455.7" stroke="#2b2224" stroke-width="1.29" opacity="0.66" fill="none"/><path d="M519.7 432.0 Q515.3 426.3 515.0 422.5" stroke="#2b2224" stroke-width="0.72" opacity="0.41" fill="none"/><path d="M576.7 430.6 Q574.1 423.8 575.5 419.0" stroke="#2b2224" stroke-width="0.71" opacity="0.65" fill="none"/><path d="M465.4 438.7 Q460.2 432.7 459.1 428.7" stroke="#2b2224" stroke-width="1.30" opacity="0.43" fill="none"/><path d="M482.0 436.7 Q479.2 429.8 480.4 424.9" stroke="#2b2224" stroke-width="1.14" opacity="0.68" fill="none"/><path d="M546.2 431.3 Q541.8 424.1 541.4 418.9" stroke="#2b2224" stroke-width="1.11" opacity="0.76" fill="none"/><path d="M566.5 430.8 Q563.7 425.2 564.8 421.6" stroke="#2b2224" stroke-width="1.22" opacity="0.63" fill="none"/><path d="M502.5 434.2 Q499.3 428.8 500.1 425.4" stroke="#2b2224" stroke-width="1.07" opacity="0.43" fill="none"/><path d="M506.2 433.7 Q503.3 425.8 504.3 419.9" stroke="#2b2224" stroke-width="1.14" opacity="0.56" fill="none"/><path d="M531.1 431.7 Q527.4 425.7 527.6 421.7" stroke="#2b2224" stroke-width="1.20" opacity="0.43" fill="none"/><path d="M535.1 431.6 Q532.2 427.6 533.4 425.6" stroke="#2b2224" stroke-width="0.99" opacity="0.49" fill="none"/><path d="M521.6 432.0 Q518.3 426.1 519.0 422.3" stroke="#2b2224" stroke-width="1.25" opacity="0.50" fill="none"/><path d="M342.9 471.1 Q339.3 466.3 339.6 463.4" stroke="#2b2224" stroke-width="0.82" opacity="0.47" fill="none"/><path d="M575.5 430.6 Q571.7 424.3 571.8 419.9" stroke="#2b2224" stroke-width="1.24" opacity="0.53" fill="none"/><path d="M513.1 432.8 Q509.9 428.3 510.6 425.7" stroke="#2b2224" stroke-width="1.18" opacity="0.77" fill="none"/><path d="M568.9 430.8 Q565.7 425.4 566.5 422.0" stroke="#2b2224" stroke-width="0.89" opacity="0.45" fill="none"/><path d="M649.6 451.0 L659.4 446.3" stroke="#3a3034" stroke-width="1.06" opacity="0.59"/><path d="M627.7 441.3 L632.3 437.2" stroke="#3a3034" stroke-width="0.84" opacity="0.36"/><path d="M641.4 445.9 L648.6 439.8" stroke="#3a3034" stroke-width="0.86" opacity="0.55"/><path d="M698.2 488.2 L702.7 481.4" stroke="#3a3034" stroke-width="0.72" opacity="0.56"/><path d="M604.1 434.2 L612.1 428.2" stroke="#3a3034" stroke-width="0.85" opacity="0.54"/><path d="M601.9 433.6 L606.3 429.6" stroke="#3a3034" stroke-width="0.71" opacity="0.55"/><path d="M623.7 440.1 L626.9 435.0" stroke="#3a3034" stroke-width="1.01" opacity="0.43"/><path d="M663.0 459.4 L671.5 454.9" stroke="#3a3034" stroke-width="1.18" opacity="0.51"/><path d="M619.9 439.0 L625.0 432.3" stroke="#3a3034" stroke-width="0.71" opacity="0.44"/><path d="M671.4 464.6 L675.5 459.9" stroke="#3a3034" stroke-width="0.87" opacity="0.51"/><path d="M652.0 452.5 L660.1 447.9" stroke="#3a3034" stroke-width="0.90" opacity="0.54"/><path d="M690.6 480.6 L695.8 478.5" stroke="#3a3034" stroke-width="1.06" opacity="0.34"/><path d="M645.4 448.3 L653.9 444.6" stroke="#3a3034" stroke-width="0.89" opacity="0.47"/><path d="M687.9 477.9 L697.7 473.9" stroke="#3a3034" stroke-width="0.93" opacity="0.50"/><path d="M620.5 439.1 L629.4 434.5" stroke="#3a3034" stroke-width="1.02" opacity="0.52"/><path d="M621.3 439.4 L631.9 435.4" stroke="#3a3034" stroke-width="1.19" opacity="0.46"/><path d="M679.1 469.4 L685.7 466.5" stroke="#3a3034" stroke-width="1.13" opacity="0.40"/><path d="M608.3 435.5 L614.7 430.5" stroke="#3a3034" stroke-width="1.08" opacity="0.45"/><path d="M602.8 433.9 L608.6 424.9" stroke="#3a3034" stroke-width="1.10" opacity="0.35"/><path d="M633.5 443.1 L639.6 434.5" stroke="#3a3034" stroke-width="0.77" opacity="0.45"/><path d="M672.4 465.2 L681.5 459.4" stroke="#3a3034" stroke-width="1.17" opacity="0.45"/><path d="M694.9 484.9 L698.4 480.6" stroke="#3a3034" stroke-width="0.96" opacity="0.39"/><path d="M672.9 465.6 L680.2 459.6" stroke="#3a3034" stroke-width="1.12" opacity="0.47"/><path d="M631.2 442.4 L638.1 439.0" stroke="#3a3034" stroke-width="1.15" opacity="0.36"/><path d="M685.1 475.1 L694.2 467.7" stroke="#3a3034" stroke-width="0.99" opacity="0.36"/></g>
<!-- highlights -->
<path d="M562 448 L582 447 L582 459 L565 459Z" fill="#f4f4f6" filter="url(#b1s)"/>
<path d="M521 456 L502 484 L515 478Z" fill="#eaeaea"/>
<path d="M536 470 C532 478 530 486 529 493 L531 493 C532 486 535 478 539 470Z" fill="#e8e8e8"/>
<!-- lower lashline sparkle -->

<path d="M700 517 C680 522 660 524 640 524" stroke="#f2e8ea" stroke-width="1.5" fill="none" opacity="0.8"/>

<!-- selection marching ants -->
<path d="M322 437 C400 405 460 393 540 391 C580 391 610 394 637 402 C680 415 715 440 745 478 C775 520 800 565 812 603 C812 612 808 619 800 620 C790 622 770 619 736 609 C720 604 710 603 690 604 L413 612 L295 547 L312 470 Z" fill="none" stroke="#fff" stroke-width="1.3"/>
<path d="M322 437 C400 405 460 393 540 391 C580 391 610 394 637 402 C680 415 715 440 745 478 C775 520 800 565 812 603 C812 612 808 619 800 620 C790 622 770 619 736 609 C720 604 710 603 690 604 L413 612 L295 547 L312 470 Z" fill="none" stroke="#111" stroke-width="1.3" stroke-dasharray="4 3"/>
<circle cx="637" cy="404" r="15" fill="none" stroke="#222" stroke-width="1.1"/>
</svg>
<svg class="a" style="left:0;top:0" width="260" height="600" viewBox="0 0 260 600">
 <path d="M38 425 L57 427 L51 432 L237 579 L47 437 L44 440Z" fill="#e83a3c"/>
</svg>

<div id="vscroll" class="a"></div>
<div id="status" class="a">
 <div class="a" style="left:0;top:0;width:48px;height:13px;background:#4a4a4a"></div>
 <div class="t" style="left:11px;top:1px;font-size:11px;line-height:13px;color:#d8d8d8">100%</div>
 <div class="t" style="left:86px;top:1px;font-size:11px;line-height:13px;color:#d0d0d0"><svg class="g"><use href="#g2"/></svg><svg class="g"><use href="#g2"/></svg>:800.2K/1.56M</div>
 <svg class="a" style="left:222px;top:3px" width="8" height="10"><path d="M2 1 L6 5 L2 9" fill="none" stroke="#bbb" stroke-width="1.2"/></svg>
</div>
<div id="rcol" class="a"></div>
<svg class="a" style="left:1420px;top:57px" width="20" height="12"><path d="M6 3 L10 6 L6 9Z M11 3 L15 6 L11 9Z" fill="#bdbdbd"/></svg>
<svg class="a" style="left:1053px;top:57px" width="44" height="714" viewBox="1053 57 44 714">
 <rect x="1053" y="57" width="44" height="12" fill="#3c3c3c"/>
 <path d="M1083 60 L1079 63 L1083 66Z M1087 60 L1083 63 L1087 66Z" fill="#bdbdbd"/>
 <rect x="1053" y="69" width="3" height="702" fill="#3e3e3e"/>
 <rect x="1094" y="69" width="3" height="702" fill="#3e3e3e"/>
 <g fill="#454545">
  <rect x="1056" y="130" width="38" height="2"/><rect x="1056" y="192" width="38" height="2"/><rect x="1056" y="254" width="38" height="2"/><rect x="1056" y="316" width="38" height="2"/><rect x="1056" y="354" width="38" height="2"/><rect x="1056" y="393" width="38" height="2"/>
 </g>
 <g fill="#4d4d4d"><rect x="1066" y="72" width="18" height="1"/><rect x="1066" y="134" width="18" height="1"/><rect x="1066" y="196" width="18" height="1"/><rect x="1066" y="258" width="18" height="1"/><rect x="1066" y="320" width="18" height="1"/><rect x="1066" y="358" width="18" height="1"/></g>
 <g fill="#e6e6e6">
  <!-- history -->
  <rect x="1069" y="81" width="4" height="4" fill="none" stroke="#e6e6e6" stroke-width="1"/>
  <rect x="1069" y="87" width="4" height="4" fill="none" stroke="#e6e6e6" stroke-width="1"/>
  <rect x="1068.5" y="93" width="5" height="4.5"/>
  <path d="M1077 84 L1080 81 L1080 83 C1084 83 1085 88 1083 92 C1082 95 1079 96 1077 96 L1077 94 C1080 94 1082 92 1082 89 C1082 86 1081 85 1080 85 L1080 87Z"/>
  <!-- play -->
  <path d="M1069 108 L1085 116.5 L1069 125Z"/>
  <!-- 3d/properties -->
  <path d="M1068 171 L1072 169 L1076 171 L1076 176 L1072 178 L1068 176Z" fill="none" stroke="#e6e6e6" stroke-width="1"/>
  <rect x="1078" y="169" width="4" height="3"/><rect x="1078" y="174" width="4" height="3"/>
  <rect x="1068" y="180" width="15" height="2.5"/>
  <!-- para -->
  <path d="M1075 233 L1081 233 L1081 246 L1079 246 L1079 235 L1077.5 235 L1077.5 246 L1075.5 246 L1075.5 240 C1071 240 1070 236.5 1075 233Z"/>
  <!-- char styles -->
  <path d="M1077 269 L1082 269 L1082 281 L1080.5 281 L1080.5 270.5 L1079.5 270.5 L1079.5 281 L1078 281 L1078 276 C1074.5 276 1074 272 1077 269Z"/>
  <rect x="1067.5" y="276.5" width="5" height="5" fill="none" stroke="#e6e6e6" stroke-width="1"/>
  <rect x="1070" y="279" width="6" height="6"/>
  <rect x="1067.5" y="302.5" width="5" height="5" fill="none" stroke="#e6e6e6" stroke-width="1"/>
  <rect x="1070" y="305" width="5" height="5"/>
 </g>
 <circle cx="1075" cy="152.5" r="7.5" fill="none" stroke="#e6e6e6" stroke-width="1.5"/>
 <rect x="1074" y="151" width="2.2" height="6" fill="#e6e6e6"/><rect x="1074" y="147.5" width="2.2" height="2" fill="#e6e6e6"/>
 <rect x="1083" y="206" width="1.2" height="14" fill="#e6e6e6"/>
 <circle cx="1084" cy="370" r="2.6" fill="#e6e6e6"/><circle cx="1084" cy="384" r="2.6" fill="#e6e6e6"/>
 <path d="M1084 370 L1073 377 L1084 384" fill="none" stroke="#e6e6e6" stroke-width="1.4"/>
 <circle cx="1073.5" cy="377" r="5.5" fill="none" stroke="#e6e6e6" stroke-width="1.4"/>
 <circle cx="1073.5" cy="377" r="2.5" fill="none" stroke="#e6e6e6" stroke-width="1.2"/>
</svg>
<div class="t" style="left:1067px;top:205px;font-size:16px;line-height:16px;color:#e6e6e6">A</div>
<div class="t" style="left:1076px;top:294px;font-size:15px;line-height:15px;color:#e6e6e6">A</div>
<div class="t" style="left:1067px;top:328px;font-size:19px;line-height:19px;color:#e6e6e6;font-family:'Liberation Serif',serif;font-style:italic">A</div>

<!-- color panel -->
<div class="panel" style="top:69px;height:233px">
  <div class="ptabs"></div>
  <div class="ptab on" style="left:0;width:41px"><svg class="g"><use href="#g5"/></svg><svg class="g"><use href="#g1"/></svg></div>
  <div class="ptab" style="left:41px;width:40px"><svg class="g"><use href="#g1"/></svg><svg class="g"><use href="#g2"/></svg></div>
  <svg class="a" style="left:326px;top:9px" width="12" height="8"><rect x="0" y="0" width="10" height="1.5" fill="#bbb"/><rect x="0" y="3" width="10" height="1.5" fill="#bbb"/><rect x="0" y="6" width="10" height="1.5" fill="#bbb"/></svg>
  <div class="a" style="left:20px;top:43px;width:18px;height:18px;background:#fff"></div>
  <div class="a" style="left:9px;top:34px;width:20px;height:18px;background:#ad6b67;border:1px solid #f3e3e0;box-shadow:0 0 0 1px #444"></div>
  <div class="a" style="left:45px;top:32px;width:246px;height:182px;background:linear-gradient(to bottom,rgba(0,0,0,0),#000),linear-gradient(to right,#fff,#f00)"></div>
  <div class="a" style="left:123px;top:89px;width:11px;height:10px;border:1px solid #f4dede;border-radius:50%"></div>
  <div class="a" style="left:308px;top:32px;width:20px;height:182px;background:linear-gradient(to bottom,#f00,#f0f 17%,#00f 33%,#0ff 50%,#0f0 67%,#ff0 83%,#f00)"></div>
  <svg class="a" style="left:299px;top:207px" width="8" height="8"><path d="M1 0 L7 4 L1 8Z" fill="#eee"/></svg>
</div>
<!-- adjustments -->
<div class="panel" style="top:304px;height:233px">
  <div class="ptabs"></div>
  <div class="ptab" style="left:0;width:41px"><svg class="g"><use href="#g1"/></svg><svg class="g"><use href="#g3"/></svg></div>
  <div class="ptab" style="left:43px;width:37px"><svg class="g"><use href="#g4"/></svg></div>
  <div class="ptab on" style="left:82px;width:41px"><svg class="g"><use href="#g2"/></svg><svg class="g"><use href="#g1"/></svg></div>
  <svg class="a" style="left:326px;top:9px" width="12" height="8"><rect x="0" y="0" width="10" height="1.5" fill="#bbb"/><rect x="0" y="3" width="10" height="1.5" fill="#bbb"/><rect x="0" y="6" width="10" height="1.5" fill="#bbb"/></svg>
  <div class="t" style="left:10px;top:31px;font-size:12px;color:#e6e6e6"><svg class="g"><use href="#g0"/></svg><svg class="g"><use href="#g5"/></svg><svg class="g"><use href="#g2"/></svg><svg class="g"><use href="#g1"/></svg></div>
</div>
<svg class="a" style="left:1130px;top:350px" width="150" height="75" viewBox="1130 350 150 75">
 <defs>
  <linearGradient id="ag1" x1="0" x2="1"><stop offset="0" stop-color="#222"/><stop offset="1" stop-color="#eee"/></linearGradient>
  <linearGradient id="ag2" x1="0" y1="1" x2="1" y2="0"><stop offset="0" stop-color="#555"/><stop offset="0.5" stop-color="#ddd"/><stop offset="1" stop-color="#555"/></linearGradient>
 </defs>
 <g stroke="#e0e0e0" fill="none" stroke-width="1.2">
  <circle cx="1152.5" cy="365" r="4.5"/>
  <path d="M1152.5 357 V359 M1152.5 371 V373 M1144.5 365 H1146.5 M1158.5 365 H1160.5 M1147 359.5 L1148.3 360.8 M1156.7 369.2 L1158 370.5 M1147 370.5 L1148.3 369.2 M1156.7 360.8 L1158 359.5"/>
  <rect x="1193.5" y="359.5" width="15" height="11"/>
  <path d="M1193.5 363 H1208.5 M1193.5 367 H1208.5 M1198 359.5 V370.5 M1203 359.5 V370.5" stroke-width="0.7"/>
  <path d="M1194 370 C1200 368 1203 363 1208 360"/>
  <rect x="1217.5" y="359.5" width="15" height="11"/>
  <path d="M1240.5 359.5 L1255.5 359.5 L1248 372Z"/>
  <rect x="1133.5" y="383.5" width="15" height="11"/>
  <path d="M1165 382 V386 M1159 385 H1171 M1159 385 L1156.5 391 M1159 385 L1161.5 391 M1171 385 L1168.5 391 M1171 385 L1173.5 391"/>
  <rect x="1181.5" y="383.5" width="15" height="11"/>
  <rect x="1253.5" y="383.5" width="15" height="11"/>
  <path d="M1253.5 387 H1268.5 M1253.5 391 H1268.5 M1258.5 383.5 V394.5 M1263.5 383.5 V394.5" stroke-width="1"/>
  <rect x="1145.5" y="407.5" width="15" height="11"/>
  <rect x="1169.5" y="407.5" width="15" height="11"/>
  <rect x="1193.5" y="407.5" width="15" height="11"/>
  <rect x="1217.5" y="407.5" width="15" height="11"/>
  <path d="M1217.5 407.5 L1225 413 L1232.5 407.5 M1217.5 418.5 L1225 413 L1232.5 418.5" stroke-width="0.9"/>
  <rect x="1241.5" y="407.5" width="15" height="11"/>
 </g>
 <g fill="#e0e0e0">
  <path d="M1152.5 360.5 A4.5 4.5 0 0 1 1152.5 369.5Z"/>
  <path d="M1169 371 L1169 365 L1171 361 L1172 366 L1174 360 L1175.5 365 L1177 359 L1179 364 L1180.5 360 L1182 365 L1184 361 L1185 371Z"/>
  <path d="M1218 370 L1232 360 L1232 370Z"/>
  <path d="M1157 391 A3 3 0 0 0 1162 391Z M1168 391 A3 3 0 0 0 1174 391Z"/>
  <rect x="1189" y="384" width="7" height="10"/>
  <path d="M1205 385 L1209 385 L1210 383.5 L1213 383.5 L1214 385 L1218 385 L1218 394 L1205 394Z"/>
  <circle cx="1237" cy="385.5" r="4.2" opacity="0.8"/><circle cx="1234" cy="390.5" r="4.2" opacity="0.8"/><circle cx="1240" cy="390.5" r="4.2" opacity="0.8"/>
 </g>
 <rect x="1134" y="390" width="14" height="4" fill="url(#ag1)"/>
 <g fill="#333"><rect x="1135" y="385" width="3" height="3"/><rect x="1139.5" y="385" width="3" height="3"/><rect x="1144" y="385" width="3" height="3"/></g>
 <circle cx="1211.5" cy="389.5" r="2.5" fill="#535353"/>
 <circle cx="1218" cy="393" r="3" fill="#535353" stroke="#e0e0e0" stroke-width="1"/>
 <rect x="1146" y="408" width="14" height="10" fill="#888"/>
 <ellipse cx="1153" cy="413" rx="5" ry="3" transform="rotate(-30 1153 413)" fill="#ddd"/>
 <rect x="1170" y="408" width="14" height="10" fill="url(#ag2)"/>
 <rect x="1194" y="408" width="14" height="10" fill="#ccc"/>
 <path d="M1194 416 L1198 412 L1201 413 L1205 409 L1208 409 L1208 412 L1205 415 L1201 414 L1197 418 L1194 418Z" fill="#444"/>
 <rect x="1242" y="408" width="14" height="10" fill="url(#ag1)"/>
 <path d="M1220 386 L1222 386 M1221 385 L1221 387 M1226 392 L1230 392" stroke="#444" stroke-width="1"/>
</svg>
<!-- layers -->
<div class="panel" style="top:539px;height:232px">
  <div class="ptabs"></div>
  <div class="ptab" style="left:0;width:42px"><svg class="g"><use href="#g5"/></svg><svg class="g"><use href="#g2"/></svg></div>
  <div class="ptab" style="left:44px;width:41px"><svg class="g"><use href="#g2"/></svg><svg class="g"><use href="#g5"/></svg></div>
  <div class="ptab on" style="left:87px;width:41px"><svg class="g"><use href="#g1"/></svg><svg class="g"><use href="#g5"/></svg></div>
  <svg class="a" style="left:326px;top:10px" width="12" height="8"><rect x="0" y="0" width="10" height="1.5" fill="#bbb"/><rect x="0" y="3" width="10" height="1.5" fill="#bbb"/><rect x="0" y="6" width="10" height="1.5" fill="#bbb"/></svg>
  <div class="a" style="left:0;top:56px;width:342px;height:1px;background:#474747"></div>
  <div class="a" style="left:0;top:82px;width:342px;height:1px;background:#474747"></div>
  <div class="a" style="left:0;top:108px;width:342px;height:1px;background:#474747"></div>
  <div class="a" style="left:5px;top:36px;width:84px;height:17px;background:#424242"></div>
  <div class="t" style="left:25px;top:38px;font-size:12px;color:#e8e8e8"><svg class="g"><use href="#g4"/></svg><svg class="g"><use href="#g4"/></svg></div>
  <div class="a" style="left:5px;top:61px;width:115px;height:18px;background:#424242"></div>
  <div class="t" style="left:12px;top:64px;font-size:12px;color:#e8e8e8"><svg class="g"><use href="#g2"/></svg><svg class="g"><use href="#g3"/></svg></div>
  <div class="t" style="left:128px;top:63px;font-size:12px;color:#dcdcdc"><svg class="g"><use href="#g4"/></svg><svg class="g"><use href="#g0"/></svg><svg class="g"><use href="#g5"/></svg><svg class="g"><use href="#g5"/></svg>:</div>
  <div class="a" style="left:185px;top:61px;width:37px;height:15px;background:#424242"></div>
  <div class="t" style="left:188px;top:62px;font-size:11px;color:#e8e8e8">100%</div>
  <div class="a" style="left:224px;top:61px;width:14px;height:15px;background:#454545"></div>
  <div class="t" style="left:7px;top:89px;font-size:12px;color:#dcdcdc"><svg class="g"><use href="#g0"/></svg><svg class="g"><use href="#g5"/></svg>:</div>
  <div class="t" style="left:152px;top:89px;font-size:12px;color:#dcdcdc"><svg class="g"><use href="#g0"/></svg><svg class="g"><use href="#g0"/></svg>:</div>
  <div class="a" style="left:185px;top:87px;width:37px;height:15px;background:#424242"></div>
  <div class="t" style="left:188px;top:88px;font-size:11px;color:#e8e8e8">100%</div>
  <div class="a" style="left:224px;top:87px;width:14px;height:15px;background:#454545"></div>
  <div class="a" style="left:31px;top:110px;width:296px;height:29px;background:#6a6a6a"></div>
  <div class="a" style="left:0;top:140px;width:342px;height:1px;background:#474747"></div>
  <div class="a" style="left:0;top:171px;width:342px;height:1px;background:#474747"></div>
  <div class="t" style="left:75px;top:119px;font-size:12px;color:#ececec"><svg class="g"><use href="#g1"/></svg><svg class="g"><use href="#g5"/></svg> 1</div>
  <div class="t" style="left:75px;top:150px;font-size:12px;color:#dcdcdc"><svg class="g"><use href="#g5"/></svg><svg class="g"><use href="#g0"/></svg></div>
</div>
<svg class="a" style="left:1096px;top:565px" width="344" height="206" viewBox="1096 565 344 206">
 <defs>
  <filter id="tb"><feGaussianBlur stdDeviation="0.5"/></filter>
 </defs>
 <!-- search icon & chevrons -->
 <circle cx="1109" cy="582" r="3.2" fill="none" stroke="#eee" stroke-width="1.6"/>
 <path d="M1111.5 584.5 L1114 587" stroke="#eee" stroke-width="2"/>
 <path d="M1175 582 L1178 585 L1181 582 M1206 608 L1209 611 L1212 608 M1324 606 L1327 609 L1330 606 M1324 632 L1327 635 L1330 632" fill="none" stroke="#a8a8a8" stroke-width="1.2"/>
 <!-- filter icons -->
 <rect x="1202.5" y="577.5" width="11" height="9" fill="none" stroke="#e6e6e6" stroke-width="1"/>
 <path d="M1204 585 L1206 582 L1208 584 L1210 581 L1212 585Z" fill="#e6e6e6"/>
 <circle cx="1232" cy="582.5" r="5" fill="#e6e6e6"/><path d="M1228.5 586 L1235.5 579" stroke="#535353" stroke-width="1.3"/>
 <path d="M1252 577 L1262 577 L1262 580 L1261 580 L1260.5 578.5 L1258 578.5 L1258 586 L1259.5 586 L1259.5 587.5 L1254.5 587.5 L1254.5 586 L1256 586 L1256 578.5 L1253.5 578.5 L1253 580 L1252 580Z" fill="#e6e6e6"/>
 <rect x="1275.5" y="578.5" width="9" height="8" fill="none" stroke="#e6e6e6" stroke-width="1"/>
 <g fill="#e6e6e6"><rect x="1274" y="577" width="3" height="3"/><rect x="1283" y="577" width="3" height="3"/><rect x="1274" y="585" width="3" height="3"/><rect x="1283" y="585" width="3" height="3"/></g>
 <path d="M1301.5 577.5 L1305 577.5 L1307.5 580 L1307.5 587.5 L1301.5 587.5Z" fill="none" stroke="#e6e6e6" stroke-width="1"/>
 <rect x="1299" y="583" width="5" height="5" fill="#e6e6e6"/>
 <rect x="1327" y="581" width="7" height="11" rx="3.5" fill="#454545"/>
 <circle cx="1330.5" cy="579.5" r="3.8" fill="#ececec"/>
 <!-- lock icons -->
 <g fill="#e6e6e6">
  <rect x="1141" y="629" width="10" height="10" fill="none" stroke="#e6e6e6" stroke-width="1"/>
  <rect x="1142" y="630" width="2.7" height="2.7"/><rect x="1147.3" y="630" width="2.7" height="2.7"/><rect x="1144.7" y="632.7" width="2.7" height="2.7"/><rect x="1142" y="635.3" width="2.7" height="2.7"/><rect x="1147.3" y="635.3" width="2.7" height="2.7"/>
  <path d="M1164 638 C1163 636 1164 634.5 1166 634.5 L1173 627 L1174 628 L1167.5 636 C1167.5 638 1166 639 1164 638Z"/>
  <rect x="1229" y="632" width="10" height="8" rx="1"/>
 </g>
 <path d="M1231 632 V630 A3 3 0 0 1 1237 630 V632" fill="none" stroke="#e6e6e6" stroke-width="1.5"/>
 <path d="M1189 627 V641 M1182 634 H1196 M1189 627 L1187 629 M1189 627 L1191 629 M1189 641 L1187 639 M1189 641 L1191 639 M1182 634 L1184 632 M1182 634 L1184 636 M1196 634 L1194 632 M1196 634 L1194 636" stroke="#e6e6e6" stroke-width="1.3" fill="none"/>
 <path d="M1207 630 H1218 V641 M1209 628 V638 H1220 M1216 630 L1214 632" stroke="#e6e6e6" stroke-width="1.2" fill="none"/>
 <!-- eyes -->
 <g fill="none" stroke="#e8e8e8" stroke-width="1.3"><path d="M1105 665 C1108 660 1115 660 1118 665 C1115 670 1108 670 1105 665Z"/><path d="M1105 696 C1108 691 1115 691 1118 696 C1115 701 1108 701 1105 696Z"/></g>
 <circle cx="1111.5" cy="665" r="2.2" fill="#e8e8e8"/><circle cx="1111.5" cy="696" r="2.2" fill="#e8e8e8"/>
 <!-- thumbs -->
 <rect x="1131" y="652" width="30" height="24" fill="#eadfdf"/>
 <rect x="1131" y="683" width="30" height="23" fill="#eadfdf"/>
 <g filter="url(#tb)">
  <path d="M1134 659 C1142 655 1152 655 1158 658 L1158 660 C1150 658 1142 658 1134 661Z" fill="#9c8884"/>
  <path d="M1136 666 C1142 663 1150 662 1156 666 C1150 669 1142 669 1136 666Z" fill="#c7a0a6"/>
  <path d="M1137 666 C1142 663 1149 663 1153 666 C1148 667 1142 667 1137 666Z" fill="#2a1a18"/>
  <circle cx="1145" cy="666" r="2.3" fill="#2a1a18"/>
  <path d="M1134 690 C1142 686 1152 686 1158 689 L1158 691 C1150 689 1142 689 1134 692Z" fill="#9c8884"/>
  <path d="M1136 697 C1142 694 1150 693 1156 697 C1150 700 1142 700 1136 697Z" fill="#c7a0a6"/>
  <path d="M1137 697 C1142 694 1149 694 1153 697 C1148 698 1142 698 1137 697Z" fill="#2a1a18"/>
  <circle cx="1145" cy="697" r="2.3" fill="#2a1a18"/>
 </g>
 <path d="M1129 655 V650 H1134 M1158 650 H1163 V655 M1129 673 V678 H1134 M1158 678 H1163 V673" fill="none" stroke="#f0f0f0" stroke-width="1"/>
 <!-- lock on bg -->
 <rect x="1397.5" y="694.5" width="9" height="7" fill="none" stroke="#e0e0e0" stroke-width="1"/>
 <path d="M1399.5 694.5 V692.5 A2.5 2.5 0 0 1 1404.5 692.5 V694.5" fill="none" stroke="#e0e0e0" stroke-width="1"/>
 <rect x="1401.3" y="697" width="1.5" height="2" fill="#e0e0e0"/>
 <!-- bottom icons -->
 <g fill="none" stroke="#9a9a9a" stroke-width="1.4"><rect x="1237" y="760" width="7" height="5" rx="2.5"/><rect x="1242" y="760" width="7" height="5" rx="2.5"/></g>
 <g fill="#e0e0e0">
  <rect x="1291" y="757" width="13" height="10"/>
  <rect x="1345" y="758" width="13" height="9"/><rect x="1345" y="756" width="5" height="3"/>
  <path d="M1372.5 757.5 H1384.5 V767.5 H1375.5 L1372.5 764.5Z" fill="none" stroke="#e0e0e0" stroke-width="1.2"/>
  <rect x="1398" y="758" width="13" height="1.5"/><rect x="1402" y="756" width="5" height="1.5"/>
  <path d="M1399.5 760 H1409.5 V768 H1399.5Z" fill="none" stroke="#e0e0e0" stroke-width="1.2"/>
 </g>
 <ellipse cx="1297.5" cy="762" rx="3.5" ry="3" fill="#535353"/>
 <circle cx="1324" cy="762" r="5" fill="#e0e0e0"/><path d="M1320.5 765.5 L1327.5 758.5" stroke="#535353" stroke-width="1.3"/>
 <path d="M1403 761 V766 M1406 761 V766" stroke="#e0e0e0" stroke-width="1"/>
</svg>
<div class="t" style="left:1264px;top:754px;font-size:13px;line-height:14px;color:#e0e0e0;font-style:italic;font-family:'Liberation Serif',serif">fx</div>
<!-- watermark -->
<svg class="a" style="left:1100px;top:700px" width="340" height="60" viewBox="1100 700 340 60">
 <defs>
  <filter id="wb"><feGaussianBlur stdDeviation="0.6"/></filter>
  <filter id="wb2"><feGaussianBlur stdDeviation="2"/></filter>
  <g id="wm" fill="none" stroke-linejoin="miter" stroke-linecap="butt">
   <g transform="translate(1114 710)" stroke-width="5.2">
    <path d="M7 2 L12 7 M4 10 L10 15 M18 0 V17 C18 26 12 31 3 34 M1 20 H32 M21 26 L31 33"/>
   </g>
   <g transform="translate(1151 710)" stroke-width="5">
    <path d="M13 0 C10 5 7 8 2 11 M10 5 H25 C21 11 13 15 3 17 M12 9 C18 14 24 16 32 17 M2 22 H32 M17 17 V34 M14 24 C11 28 7 31 2 33 M20 24 C23 28 27 31 32 33"/>
   </g>
   <g transform="translate(1236 709)" stroke-width="3.6">
    <path d="M1 7 H34 M11 1 V12 M24 1 V12 M13 13 C11 18 8 22 3 26 M8 20 V35 M25 14 V31 C25 33 26 34 28 34 H33 V28 M32 16 C27 21 22 24 16 27"/>
   </g>
   <g transform="translate(1271 709)" stroke-width="3.6">
    <path d="M7 1 C6 8 4 13 2 18 C8 22 12 27 15 33 M13 11 C12 22 8 29 2 34 M0 13 H16 M18 5 H31 C29 8 27 10 24 12 M24 12 V31 C24 34 22 34 19 33 M16 19 H35"/>
   </g>
   <g transform="translate(1309 709)" stroke-width="3.6">
    <path d="M10 1 C8 7 5 12 1 16 M6 10 V35 M17 1 C16 6 14 9 12 12 M15 7 H33 C33 9 32 11 30 13 M23 12 V31 C23 34 21 34 18 33 M17 19 C16 23 14 26 11 29 M29 19 C31 22 32 25 34 28"/>
   </g>
   <g transform="translate(1345 709)" stroke-width="3.6">
    <path d="M2 14 L29 9 V20 C29 22 28 22 25 22 M16 2 V27 M6 7 V29 C6 32 7 33 10 33 H31 C32 33 33 31 33 26"/>
   </g>
   <g transform="translate(1381 709)" stroke-width="3.6">
    <path d="M7 1 C6 8 4 13 2 18 C8 22 12 27 15 33 M13 11 C12 22 8 29 2 34 M0 13 H16 M18 5 H31 C29 8 27 10 24 12 M24 12 V31 C24 34 22 34 19 33 M16 19 H35"/>
   </g>
  </g>
 </defs>
 <rect x="1284" y="714" width="156" height="21" fill="#eef2f6"/>
 <g fill="#3d78b8" opacity="0.85">
  <rect x="1290" y="720" width="6" height="8"/><rect x="1320" y="722" width="8" height="6"/><rect x="1350" y="720" width="8" height="9"/><rect x="1385" y="721" width="7" height="7"/>
  <path d="M1422 730 L1430 722 C1432 720 1436 721 1435 724 C1433 726 1431 725 1430 724 L1424 732Z"/>
 </g>
 <ellipse cx="1272" cy="728" rx="14" ry="15" fill="#d8603c" filter="url(#wb2)"/>
 <use href="#wm" stroke="#000" transform="translate(2.5 2.5)" filter="url(#wb)"/>
 <text x="1193" y="741" font-family="Liberation Sans" font-size="41" fill="#000" transform="translate(2.5 2.5)">@</text>
 <use href="#wm" stroke="#fff"/>
 <text x="1193" y="741" font-family="Liberation Sans" font-size="41" fill="#fff">@</text>
</svg>
</body></html>
